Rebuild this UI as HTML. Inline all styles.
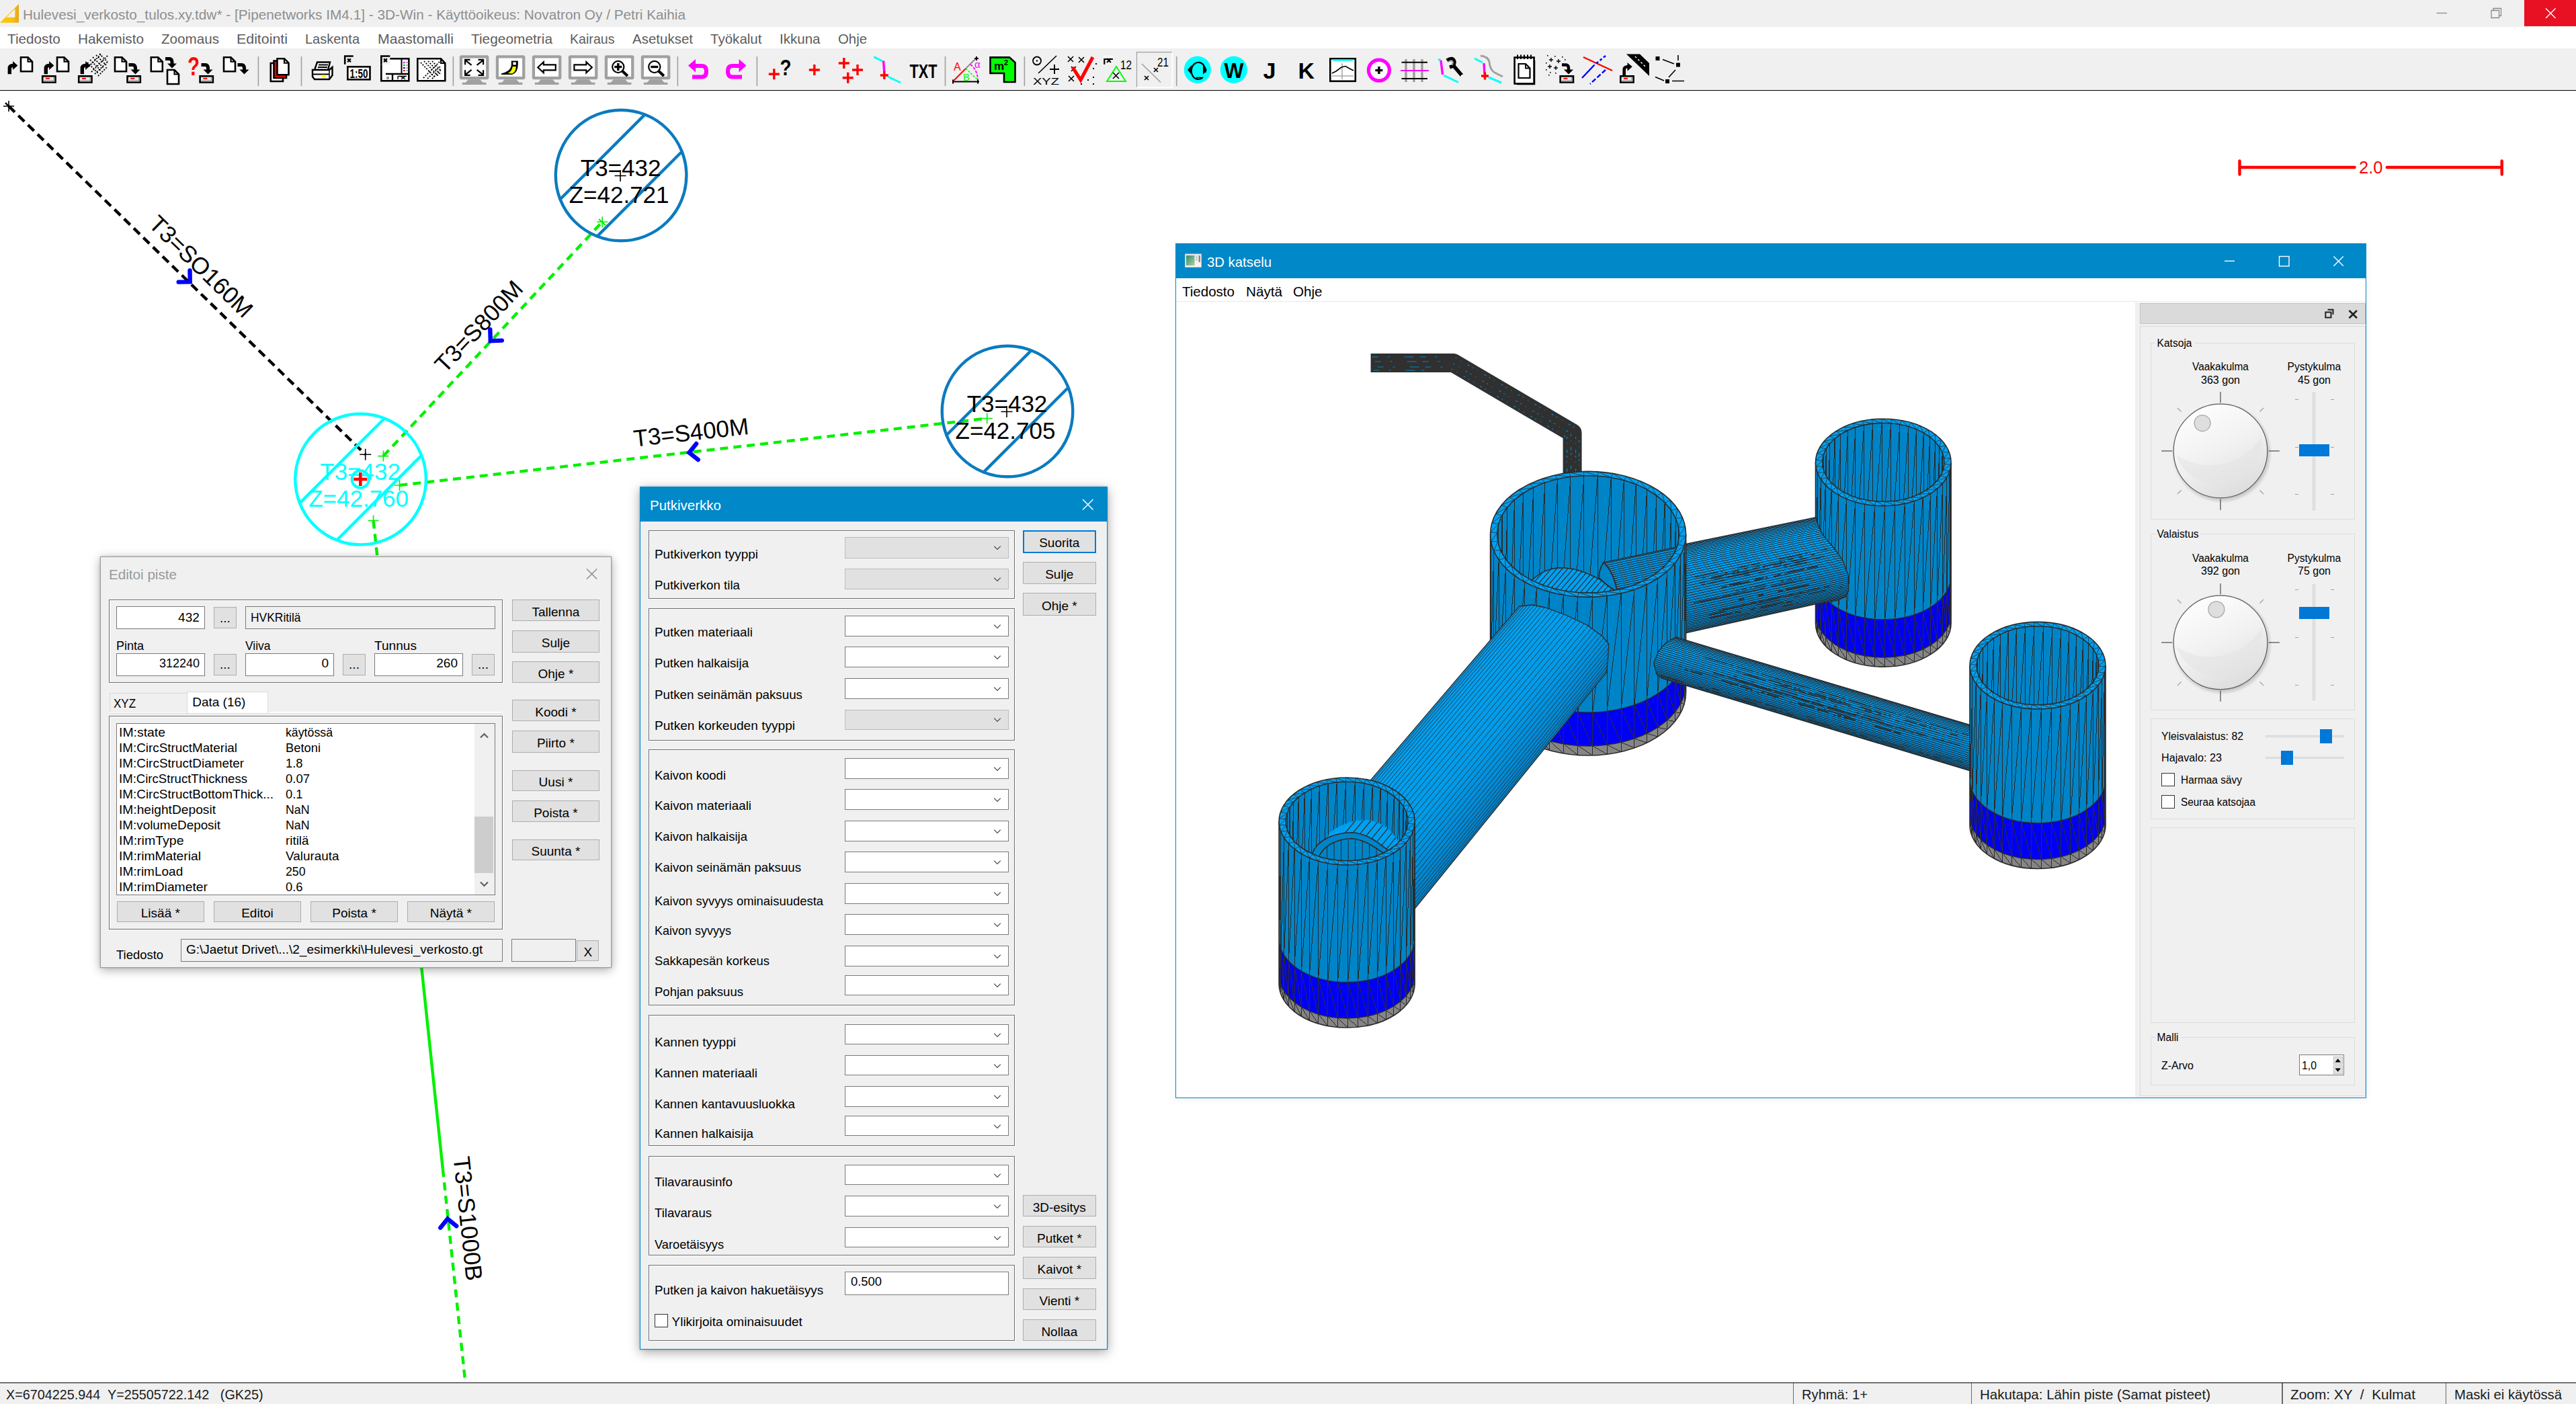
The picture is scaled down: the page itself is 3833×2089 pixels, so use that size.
<!DOCTYPE html>
<html><head><meta charset="utf-8"><title>3D-Win</title><style>html,body{margin:0;padding:0}
body{width:3833px;height:2089px;overflow:hidden;background:#fff;position:relative;font-family:"Liberation Sans",sans-serif}
.t{position:absolute;white-space:pre;line-height:1;transform-origin:0 0}
.b{position:absolute;box-sizing:border-box}
svg{overflow:hidden;display:block}
svg text{font-family:"Liberation Sans",sans-serif}
</style></head><body>
<div class="b" style="left:0.0px;top:0.0px;width:3833.0px;height:40.0px;background:#f0f0f0;"></div><svg style="position:absolute;left:0;top:4px" width="30" height="32" viewBox="0 4 30 32"><defs><linearGradient id="yg" x1="0" x2="1"><stop offset="0" stop-color="#ffc600"/><stop offset="0.6" stop-color="#fbc40c"/><stop offset="1" stop-color="#e8a818"/></linearGradient></defs><path d="M0,33.8 L28,6 V33.8 Z M9.5,25.8 H22.3 V13.2 Z" fill="url(#yg)" fill-rule="evenodd"/></svg><span class="t" style="left:33.5px;top:10.8px;font-size:21px;color:#8e8e8e;transform:scaleX(0.9896);">Hulevesi_verkosto_tulos.xy.tdw* - [Pipenetworks IM4.1] - 3D-Win - Käyttöoikeus: Novatron Oy / Petri Kaihia</span><div class="b" style="left:3756.0px;top:0.0px;width:77.0px;height:38.5px;background:#e81123;"></div><svg style="position:absolute;left:3600px;top:0" width="233" height="40" viewBox="3600 0 233 40"><path d="M3625.5,19.5 H3641" stroke="#8a8a8a" stroke-width="1.3"/><path d="M3707,15.5 H3718.5 V26.5 H3707 Z M3710,15.5 V12.5 H3721.5 V23.5 H3718.5" fill="none" stroke="#8a8a8a" stroke-width="1.3"/><path d="M3788,12.5 L3802.5,27 M3802.5,12.5 L3788,27" stroke="#fff" stroke-width="1.5"/></svg><div class="b" style="left:0.0px;top:40.0px;width:3833.0px;height:32.0px;background:#fff;"></div><span class="t" style="left:11.0px;top:46.8px;font-size:21px;color:#5c5c5c;transform:scaleX(0.9866);">Tiedosto</span><span class="t" style="left:116.0px;top:46.8px;font-size:21px;color:#5c5c5c;transform:scaleX(0.9879);">Hakemisto</span><span class="t" style="left:239.7px;top:46.8px;font-size:21px;color:#5c5c5c;transform:scaleX(0.9824);">Zoomaus</span><span class="t" style="left:352.0px;top:46.8px;font-size:21px;color:#5c5c5c;transform:scaleX(1.0172);">Editointi</span><span class="t" style="left:454.0px;top:46.8px;font-size:21px;color:#5c5c5c;transform:scaleX(0.9503);">Laskenta</span><span class="t" style="left:561.7px;top:46.8px;font-size:21px;color:#5c5c5c;transform:scaleX(1.0086);">Maastomalli</span><span class="t" style="left:700.5px;top:46.8px;font-size:21px;color:#5c5c5c;transform:scaleX(0.9936);">Tiegeometria</span><span class="t" style="left:847.8px;top:46.8px;font-size:21px;color:#5c5c5c;transform:scaleX(0.9339);">Kairaus</span><span class="t" style="left:940.7px;top:46.8px;font-size:21px;color:#5c5c5c;transform:scaleX(0.9760);">Asetukset</span><span class="t" style="left:1056.8px;top:46.8px;font-size:21px;color:#5c5c5c;transform:scaleX(0.9782);">Työkalut</span><span class="t" style="left:1159.7px;top:46.8px;font-size:21px;color:#5c5c5c;transform:scaleX(0.9778);">Ikkuna</span><span class="t" style="left:1246.5px;top:46.8px;font-size:21px;color:#5c5c5c;transform:scaleX(0.9694);">Ohje</span><div class="b" style="left:0.0px;top:72.0px;width:3833.0px;height:62.0px;background:#f0f0f0;"></div><div class="b" style="left:0.0px;top:134.0px;width:3833.0px;height:1.2px;background:#000;height:1.3px;"></div><svg class="tb" style="position:absolute;left:0;top:0" width="2600" height="136" viewBox="0 0 2600 136" font-family="Liberation Sans, sans-serif"><path d="M14.3,110.2 V101.6 Q14.3,97.4 19.6,97.4" fill="none" stroke="#000" stroke-width="5.4"/><path d="M19.1,91.1 L26.4,97.4 L19.1,103.9 Z" fill="#000"/><path d="M31.0,85.3 H41.5 L48.0,91.8 V106.3 H31.0 Z" fill="#fff" stroke="#000" stroke-width="2.6" stroke-linejoin="miter"/><path d="M41.5,85.3 V91.8 H48.0" fill="none" stroke="#000" stroke-width="2.1"/><path d="M68.3,110.2 V101.6 Q68.3,97.4 73.6,97.4" fill="none" stroke="#000" stroke-width="5.4"/><path d="M73.1,91.1 L80.4,97.4 L73.1,103.9 Z" fill="#000"/><path d="M85.0,85.3 H95.5 L102.0,91.8 V106.3 H85.0 Z" fill="#fff" stroke="#000" stroke-width="2.6" stroke-linejoin="miter"/><path d="M95.5,85.3 V91.8 H102.0" fill="none" stroke="#000" stroke-width="2.1"/><rect x="63.2" y="113.3" width="19.3" height="9.2" fill="#e8e8e8" stroke="#000" stroke-width="2.6"/><path d="M65.4,120.6 H80.4 V115.0" fill="none" stroke="#a0a0a0" stroke-width="2"/><rect x="67.9" y="115.8" width="6" height="2" fill="#f00"/><path d="M122.3,110.2 V101.6 Q122.3,97.4 127.6,97.4" fill="none" stroke="#000" stroke-width="5.4"/><path d="M127.1,91.1 L134.4,97.4 L127.1,103.9 Z" fill="#000"/><rect x="117.2" y="113.3" width="19.3" height="9.2" fill="#e8e8e8" stroke="#000" stroke-width="2.6"/><path d="M119.4,120.6 H134.4 V115.0" fill="none" stroke="#a0a0a0" stroke-width="2"/><rect x="121.9" y="115.8" width="6" height="2" fill="#f00"/><g stroke="#000" stroke-width="1.8" stroke-dasharray="2 2" fill="none"><path d="M130,93 L146,109 M134,89 L151,106 M138,85 L155,102 M143,82 L158,97 M148,80 L160,92"/><path d="M136,107 L160,83 M141,110 L160,92 M132,99 L150,81 M146,113 L159,100"/></g><path d="M171.0,85.3 H181.5 L188.0,91.8 V106.3 H171.0 Z" fill="#fff" stroke="#000" stroke-width="2.6" stroke-linejoin="miter"/><path d="M181.5,85.3 V91.8 H188.0" fill="none" stroke="#000" stroke-width="2.1"/><path d="M191.5,96.5 H197.5 Q201.5,96.5 201.5,102.0 V104.0" fill="none" stroke="#000" stroke-width="5"/><path d="M194.5,103.5 H208.5 L201.5,110.5 Z" fill="#000"/><rect x="189.5" y="113.3" width="19.3" height="9.2" fill="#e8e8e8" stroke="#000" stroke-width="2.6"/><path d="M191.7,120.6 H206.7 V115.0" fill="none" stroke="#a0a0a0" stroke-width="2"/><rect x="194.2" y="115.8" width="6" height="2" fill="#f00"/><path d="M224.8,85.3 H235.3 L241.8,91.8 V106.3 H224.8 Z" fill="#fff" stroke="#000" stroke-width="2.6" stroke-linejoin="miter"/><path d="M235.3,85.3 V91.8 H241.8" fill="none" stroke="#000" stroke-width="2.1"/><path d="M246.0,87.5 H252.0 Q256.0,87.5 256.0,93.0 V95.0" fill="none" stroke="#000" stroke-width="5"/><path d="M249.0,94.5 H263.0 L256.0,101.5 Z" fill="#000"/><path d="M249.0,104.0 H259.5 L266.0,110.5 V125.0 H249.0 Z" fill="#fff" stroke="#000" stroke-width="2.6" stroke-linejoin="miter"/><path d="M259.5,104.0 V110.5 H266.0" fill="none" stroke="#000" stroke-width="2.1"/><text x="279.0" y="112.0" font-size="38" fill="#f00" font-weight="bold" textLength="18" lengthAdjust="spacingAndGlyphs">?</text><path d="M299.5,96.5 H305.5 Q309.5,96.5 309.5,102.0 V104.0" fill="none" stroke="#000" stroke-width="5"/><path d="M302.5,103.5 H316.5 L309.5,110.5 Z" fill="#000"/><rect x="297.6" y="113.3" width="19.3" height="9.2" fill="#e8e8e8" stroke="#000" stroke-width="2.6"/><path d="M299.8,120.6 H314.8 V115.0" fill="none" stroke="#a0a0a0" stroke-width="2"/><rect x="302.3" y="115.8" width="6" height="2" fill="#f00"/><path d="M333.0,85.3 H343.5 L350.0,91.8 V106.3 H333.0 Z" fill="#fff" stroke="#000" stroke-width="2.6" stroke-linejoin="miter"/><path d="M343.5,85.3 V91.8 H350.0" fill="none" stroke="#000" stroke-width="2.1"/><path d="M353.5,96.5 H359.5 Q363.5,96.5 363.5,102.0 V104.0" fill="none" stroke="#000" stroke-width="5"/><path d="M356.5,103.5 H370.5 L363.5,110.5 Z" fill="#000"/><rect x="383.6" y="84" width="1.6" height="44" fill="#a0a0a0"/><path d="M402.8,94 H421 V121 H402.8 Z" fill="#fff" stroke="#000" stroke-width="2.6"/><path d="M407.5,90.5 H426 V116 H407.5 Z" fill="#f00" stroke="#000" stroke-width="2.6"/><path d="M412.5,87.2 H423.0 L429.5,93.7 V111.2 H412.5 Z" fill="#fff" stroke="#000" stroke-width="2.6" stroke-linejoin="miter"/><path d="M423.0,87.2 V93.7 H429.5" fill="none" stroke="#000" stroke-width="2.1"/><rect x="447.7" y="84" width="1.6" height="44" fill="#a0a0a0"/><path d="M472,92.5 H491 L488,104 H468 Z" fill="#fff" stroke="#000" stroke-width="2.4"/><path d="M474,96.5 H488 M473,100 H487" stroke="#000" stroke-width="1.8"/><path d="M465,104 H490 L494.5,100 V112 L490,118 H468 L465,114 Z" fill="#fff" stroke="#000" stroke-width="2.4"/><path d="M466,110.5 H490" stroke="#000" stroke-width="2"/><rect x="478" y="111.5" width="6" height="3" fill="#ff0"/><path d="M490,104 V118" stroke="#000" stroke-width="1.5"/><path d="M513.2,95.8 V83.5 H525.7" fill="none" stroke="#000" stroke-width="2.6"/><path d="M516.1,89.8 H522.9 M519.5,86.4 V93.2" stroke="#000" stroke-width="2.2" fill="none" transform="rotate(45 519.5 89.8)"/><rect x="517.3" y="99.3" width="33.2" height="19" fill="#fff" stroke="#000" stroke-width="2.6"/><text x="520.5" y="115.5" font-size="18" fill="#000" font-weight="bold" textLength="27" lengthAdjust="spacingAndGlyphs">1:50</text><rect x="567.3" y="87.3" width="41" height="33" fill="#fff" stroke="#000" stroke-width="2.6"/><rect x="566" y="82.2" width="14.3" height="13.6" fill="#f0f0f0"/><path d="M567.3,95.8 V83.5 H580.3" fill="none" stroke="#000" stroke-width="2.6"/><path d="M570.1,89.8 H576.9 M573.5,86.4 V93.2" stroke="#000" stroke-width="2.2" fill="none" transform="rotate(45 573.5 89.8)"/><path d="M597.5,87 V110" stroke="#000" stroke-width="2"/><path d="M574,110 H609 M584,110 V120" stroke="#000" stroke-width="2.4"/><rect x="600" y="92" width="2.6" height="2.2" fill="#f0f"/><rect x="600" y="96" width="2.6" height="2.2" fill="#0c0"/><rect x="600" y="100" width="2.6" height="2.2" fill="#00f"/><rect x="600" y="104" width="2.6" height="2.2" fill="#f00"/><path d="M604,93 H607.5 M604,97 H607.5 M604,101 H607.5 M604,105 H607.5" stroke="#999" stroke-width="1.6"/><path d="M592,113.5 H605 M592,113.5 V118 M596,113.5 L603,118 M603,113.5 L597,118" stroke="#000" stroke-width="1.4"/><path d="M575,114 h4 v4 h-4z" fill="#999"/><path d="M621.3,87.3 H656 L662.3,94 V120.3 H621.3 Z" fill="#fff" stroke="#000" stroke-width="2.6"/><path d="M656,87.3 V94 H662.3" fill="none" stroke="#000" stroke-width="2"/><g stroke="#000" stroke-width="1.8" stroke-dasharray="2 2" fill="none"><path d="M626,93 L648,116 M631,91 L653,114 M637,91 L655,110 M643,91 L656,105"/><path d="M630,116 L654,92 M636,117 L656,98 M643,117 L657,103"/></g><rect x="673.6" y="84" width="1.6" height="44" fill="#a0a0a0"/><rect x="683.8" y="82.2" width="43.6" height="36" rx="3" fill="#a0a0a0"/><rect x="688.1" y="86.5" width="35.0" height="27.4" fill="#fff"/><path d="M696.8,118.2 H714.4 L718.4,122.7 H723.4 V126.0 H687.8 V122.7 H692.8 Z" fill="#a0a0a0"/><rect x="737.8" y="82.2" width="43.6" height="36" rx="3" fill="#a0a0a0"/><rect x="742.1" y="86.5" width="35.0" height="27.4" fill="#fff"/><path d="M750.8,118.2 H768.4 L772.4,122.7 H777.4 V126.0 H741.8 V122.7 H746.8 Z" fill="#a0a0a0"/><rect x="791.8" y="82.2" width="43.6" height="36" rx="3" fill="#a0a0a0"/><rect x="796.1" y="86.5" width="35.0" height="27.4" fill="#fff"/><path d="M804.8,118.2 H822.4 L826.4,122.7 H831.4 V126.0 H795.8 V122.7 H800.8 Z" fill="#a0a0a0"/><rect x="845.8" y="82.2" width="43.6" height="36" rx="3" fill="#a0a0a0"/><rect x="850.1" y="86.5" width="35.0" height="27.4" fill="#fff"/><path d="M858.8,118.2 H876.4 L880.4,122.7 H885.4 V126.0 H849.8 V122.7 H854.8 Z" fill="#a0a0a0"/><rect x="899.8" y="82.2" width="43.6" height="36" rx="3" fill="#a0a0a0"/><rect x="904.1" y="86.5" width="35.0" height="27.4" fill="#fff"/><path d="M912.8,118.2 H930.4 L934.4,122.7 H939.4 V126.0 H903.8 V122.7 H908.8 Z" fill="#a0a0a0"/><rect x="953.8" y="82.2" width="43.6" height="36" rx="3" fill="#a0a0a0"/><rect x="958.1" y="86.5" width="35.0" height="27.4" fill="#fff"/><path d="M966.8,118.2 H984.4 L988.4,122.7 H993.4 V126.0 H957.8 V122.7 H962.8 Z" fill="#a0a0a0"/><g stroke="#000" stroke-width="2.2" fill="none"><path d="M701.5999999999999,96.8 L692.0999999999999,89.3 M692.0999999999999,96.3 V88.8 H699.5999999999999"/><path d="M709.5999999999999,96.8 L719.0999999999999,89.3 M719.0999999999999,96.3 V88.8 H711.5999999999999"/><path d="M701.5999999999999,103.8 L692.0999999999999,111.3 M692.0999999999999,104.3 V111.8 H699.5999999999999"/><path d="M709.5999999999999,103.8 L719.0999999999999,111.3 M719.0999999999999,104.3 V111.8 H711.5999999999999"/></g><path d="M745.8,111 H761.8 Q770.8,108 770.8,96 V90.5 H760.8 V97 Q759.8,106 745.8,109.5 Z" fill="#000"/><path d="M755.8,109 Q761.8,106 762.8,99 H767.8 Q767.8,107 761.8,109.5 Z" fill="#ff0"/><rect x="763.3" y="92.5" width="4.5" height="4" fill="#fff"/><path d="M800.3,100.3 L808.8,92.3 V96.3 H826.8 V104.3 H808.8 V108.3 Z" fill="#fff" stroke="#000" stroke-width="2.2"/><path d="M880.9,100.3 L872.4,92.3 V96.3 H854.4 V104.3 H872.4 V108.3 Z" fill="#fff" stroke="#000" stroke-width="2.2"/><circle cx="919.8" cy="99.5" r="8.6" fill="#fff" stroke="#000" stroke-width="2.2"/><path d="M926.3,106.0 L933.8,113.0" stroke="#000" stroke-width="4.2"/><path d="M914.3,99.5 H925.3" stroke="#000" stroke-width="3.4"/><path d="M919.8,94.0 V105.0" stroke="#000" stroke-width="3.4"/><circle cx="973.8" cy="99.5" r="8.6" fill="#fff" stroke="#000" stroke-width="2.2"/><path d="M980.3,106.0 L987.8,113.0" stroke="#000" stroke-width="4.2"/><path d="M968.3,99.5 H979.3" stroke="#000" stroke-width="3.4"/><rect x="1007.6" y="84" width="1.6" height="44" fill="#a0a0a0"/><path d="M1031,98 H1044 Q1051,98 1051,106 Q1051,114.5 1044,114.5 H1030" fill="none" stroke="#f0f" stroke-width="6"/><path d="M1024,97.5 L1035,88 V107.5 Z" fill="#f0f"/><path d="M1103,98 H1090 Q1083,98 1083,106 Q1083,114.5 1090,114.5 H1104" fill="none" stroke="#f0f" stroke-width="6"/><path d="M1110.5,97.5 L1099.5,88 V107.5 Z" fill="#f0f"/><rect x="1125.6" y="84" width="1.6" height="44" fill="#a0a0a0"/><path d="M1143.8,110.2 H1159.8 M1151.8,102.2 V118.2" stroke="#f00" stroke-width="3.4" fill="none"/><text x="1160.5" y="112.0" font-size="34" fill="#000" font-weight="bold" textLength="17" lengthAdjust="spacingAndGlyphs">?</text><path d="M1203.8,104.0 H1219.8 M1211.8,96.0 V112.0" stroke="#f00" stroke-width="3.4" fill="none"/><path d="M1247.8,94.0 H1263.8 M1255.8,86.0 V102.0" stroke="#f00" stroke-width="3.4" fill="none"/><path d="M1268.0,104.0 H1284.0 M1276.0,96.0 V112.0" stroke="#f00" stroke-width="3.4" fill="none"/><path d="M1253.7,115.8 H1269.7 M1261.7,107.8 V123.8" stroke="#f00" stroke-width="3.4" fill="none"/><path d="M1300.3,84.7 L1313,91" stroke="#0ff" stroke-width="3"/><path d="M1314.5,90.5 L1315.8,107" stroke="#f0f" stroke-width="3.4"/><path d="M1309.8,112.0 H1321.8 M1315.8,106.0 V118.0" stroke="#f00" stroke-width="3.4" fill="none"/><path d="M1321,114 L1340,123" stroke="#0ff" stroke-width="3"/><text x="1353.5" y="116.0" font-size="30" fill="#000" font-weight="bold" textLength="41" lengthAdjust="spacingAndGlyphs">TXT</text><rect x="1405.7" y="84" width="1.6" height="44" fill="#a0a0a0"/><path d="M1418,121.5 H1457" stroke="#000" stroke-width="2.2"/><path d="M1418,118.5 V124.5 M1455,118.5 V124.5" stroke="#000" stroke-width="2"/><path d="M1419,120 L1437,102" stroke="#f00" stroke-width="2"/><path d="M1437,102 L1452,87" stroke="#888" stroke-width="1.8"/><path d="M1450.0,87.0 H1456.0 M1453.0,84.0 V90.0" stroke="#000" stroke-width="2" fill="none"/><path d="M1437,102 L1455,119" stroke="#0f0" stroke-width="1.6" stroke-dasharray="3 2"/><path d="M1444,96 Q1454,104 1455,118" stroke="#f0f" stroke-width="1.8" fill="none" stroke-dasharray="4 2"/><text x="1419.0" y="105.0" font-size="16" fill="#f00">A</text><text x="1433.0" y="119.5" font-size="15" fill="#0f0">B</text><text x="1450.0" y="101.0" font-size="15" fill="#f0f">α</text><path d="M1473.5,85.4 H1502 L1510.5,93 V122 H1494 V109 H1473.5 Z" fill="#0f0" stroke="#000" stroke-width="2.6"/><text x="1479.0" y="104.0" font-size="17" fill="#000" font-weight="bold">m</text><text x="1494.0" y="97.0" font-size="11" fill="#000" font-weight="bold">2</text><rect x="1523.6" y="84" width="1.6" height="44" fill="#a0a0a0"/><circle cx="1543" cy="90.5" r="6" fill="none" stroke="#000" stroke-width="1.8"/><circle cx="1543" cy="90.5" r="1.2" fill="#000"/><path d="M1545,109 L1572,83" stroke="#000" stroke-width="1.6"/><path d="M1562.0,103.0 H1576.0 M1569.0,96.0 V110.0" stroke="#000" stroke-width="2" fill="none"/><text x="1537.0" y="125.5" font-size="15" fill="#000" textLength="39" lengthAdjust="spacingAndGlyphs">XYZ</text><g stroke="#000" stroke-width="1.6"><path d="M1589,84 l8,8 m0,-8 l-8,8 M1605,85 l8,8 m0,-8 l-8,8 M1590,113 l8,8 m0,-8 l-8,8 M1594,99 l7,7 m0,-7 l-7,7"/></g><path d="M1596,100 L1608,119 L1626,85" fill="none" stroke="#f00" stroke-width="5"/><g fill="#000"><rect x="1630" y="94" width="2" height="2"/><rect x="1626" y="101" width="2" height="2"/><rect x="1626" y="114" width="2" height="2"/><rect x="1618" y="118" width="2" height="2"/><rect x="1626" y="124" width="2" height="2"/><rect x="1608" y="124" width="2" height="2"/></g><rect x="1642" y="82.2" width="14.3" height="13.6" fill="#f7f7f7"/><path d="M1643.3,95.8 V88 H1656" fill="none" stroke="#000" stroke-width="2.2"/><path d="M1647,87 l6,6 m0,-6 l-6,6" stroke="#000" stroke-width="2"/><path d="M1661,99 L1647,121 H1675 Z" fill="none" stroke="#0f0" stroke-width="2"/><path d="M1656,108 l9,9 m0,-9 l-9,9" stroke="#000" stroke-width="1.6"/><text x="1667.0" y="103.0" font-size="18" fill="#000" textLength="17" lengthAdjust="spacingAndGlyphs">12</text><rect x="1691" y="77.2" width="53.5" height="53" fill="#f0f0f0"/><path d="M1691.5,130 V77.7 H1744" fill="none" stroke="#a0a0a0" stroke-width="1.2"/><path d="M1691.5,130.2 H1744.4 V77.7" fill="none" stroke="#fff" stroke-width="1.8"/><path d="M1699,95 L1727,122.5" stroke="#999" stroke-width="1.4"/><path d="M1717,101 l6,6 m0,-6 l-6,6 M1703,113 l6,6 m0,-6 l-6,6" stroke="#000" stroke-width="1.6"/><text x="1722.0" y="98.5" font-size="18" fill="#000" textLength="17" lengthAdjust="spacingAndGlyphs">21</text><rect x="1749.9" y="84" width="1.6" height="44" fill="#a0a0a0"/><circle cx="1781.8" cy="103.7" r="20.1" fill="#0ff"/><path d="M1790,115 A10.5,12.5 0 1 1 1793.5,108" fill="none" stroke="#000" stroke-width="2.2"/><path d="M1767,104 L1773,97 V111 Z M1796,104 L1790,97 V111 Z" fill="#000"/><path d="M1780,115.5 H1788" stroke="#000" stroke-width="1.6"/><circle cx="1835.8" cy="103.7" r="20.1" fill="#0ff"/><text x="1821.5" y="115.5" font-size="32" fill="#000" font-weight="bold" textLength="29" lengthAdjust="spacingAndGlyphs">W</text><text x="1879.5" y="116.8" font-size="33" fill="#000" font-weight="bold" textLength="19" lengthAdjust="spacingAndGlyphs">J</text><text x="1931.5" y="116.8" font-size="33" fill="#000" font-weight="bold" textLength="24.5" lengthAdjust="spacingAndGlyphs">K</text><rect x="1979.3" y="87.3" width="37.5" height="33.5" fill="#fff" stroke="#000" stroke-width="2.6"/><path d="M1983,89.5 H2013" stroke="#0ff" stroke-width="2.4"/><path d="M1997,94 V118 M1982,113 H2014" stroke="#aaa" stroke-width="1.6"/><path d="M1982,109 L1988,106 L1996,100 L2002,98.5 L2008,102 L2014,105" fill="none" stroke="#000" stroke-width="1.6"/><circle cx="2051.9" cy="104.6" r="15.5" fill="#fff" stroke="#f0f" stroke-width="5.2"/><path d="M2046.4,104.6 H2057.4 M2051.9,99.1 V110.1" stroke="#000" stroke-width="3.4" fill="none"/><path d="M2092,88 V122 M2104,88 V122 M2116,88 V122" stroke="#999" stroke-width="3.2"/><path d="M2085.5,92.8 H2124 M2085.5,117 H2124" stroke="#000" stroke-width="2"/><path d="M2084,105 H2126" stroke="#f0f" stroke-width="2"/><path d="M2140,88 L2144,90" stroke="#0ff" stroke-width="3"/><path d="M2144,90 L2146.5,111" stroke="#f0f" stroke-width="3.4" fill="none"/><path d="M2148,112 L2170,122.5" stroke="#0ff" stroke-width="3"/><path d="M2153,90 Q2162,84 2164,92 L2163,98 L2157,100 M2163,98 L2175,112" fill="none" stroke="#000" stroke-width="5.5"/><path d="M2155,92 Q2161,88 2162,93 L2161,97" fill="none" stroke="#999" stroke-width="2"/><circle cx="2175.5" cy="112.5" r="1.6" fill="#fff"/><path d="M2194,87 L2206,93" stroke="#0ff" stroke-width="3"/><path d="M2208,94 L2209,110" stroke="#f0f" stroke-width="3.4"/><path d="M2204.0,113.0 H2215.0 M2209.5,107.5 V118.5" stroke="#f00" stroke-width="3.4" fill="none"/><path d="M2215,115 L2234,123" stroke="#0ff" stroke-width="3"/><path d="M2203,83 Q2214,84 2216,92 Q2217,104 2224,108 L2236,114" fill="none" stroke="#a0a0a0" stroke-width="3"/><rect x="2253.6" y="85.5" width="29" height="39" fill="#fff" stroke="#000" stroke-width="2.6"/><path d="M2258,81.5 V88 M2263,81.5 V88 M2268,81.5 V88 M2273,81.5 V88 M2278,81.5 V88" stroke="#000" stroke-width="2"/><path d="M2283.5,90 V125.5 H2257" stroke="#000" stroke-width="1.6" fill="none"/><path d="M2259.5,95.0 H2270.0 L2276.5,101.5 V116.0 H2259.5 Z" fill="#fff" stroke="#000" stroke-width="2.2" stroke-linejoin="miter"/><path d="M2270.0,95.0 V101.5 H2276.5" fill="none" stroke="#000" stroke-width="1.8"/><g stroke="#000" stroke-width="1.4"><path d="M2305,89 h6 m-3,-3 v6 M2316,91 h6 m-3,-3 v6 M2303,99 h6 m-3,-3 v6 M2312,101 h6 m-3,-3 v6"/></g><g fill="#000"><rect x="2302" y="82" width="1.6" height="1.6"/><rect x="2313" y="83" width="1.6" height="1.6"/><rect x="2324" y="84" width="1.6" height="1.6"/><rect x="2328" y="88" width="1.6" height="1.6"/><rect x="2300" y="93" width="1.6" height="1.6"/><rect x="2300" y="103" width="1.6" height="1.6"/><rect x="2306" y="107" width="1.6" height="1.6"/><rect x="2314" y="108" width="1.6" height="1.6"/><rect x="2304" y="111" width="1.6" height="1.6"/></g><path d="M2324.0,96.5 H2330.0 Q2334.0,96.5 2334.0,102.0 V104.0" fill="none" stroke="#000" stroke-width="4.4"/><path d="M2327.0,103.5 H2341.0 L2334.0,110.5 Z" fill="#000"/><rect x="2321.7" y="113.3" width="19.3" height="9.2" fill="#e8e8e8" stroke="#000" stroke-width="2.6"/><path d="M2323.9,120.6 H2338.9 V115.0" fill="none" stroke="#a0a0a0" stroke-width="2"/><rect x="2326.4" y="115.8" width="6" height="2" fill="#f00"/><path d="M2356,85 L2399,105" stroke="#f00" stroke-width="2.4"/><path d="M2372,97 L2354,116" stroke="#00f" stroke-width="2.4"/><path d="M2389,83 L2372,97" stroke="#00f" stroke-width="2.4" stroke-dasharray="4 3"/><path d="M2389,104 L2366,125" stroke="#00f" stroke-width="2.4" stroke-dasharray="7 3"/><path d="M2416.7,112.1 V103.5 Q2416.7,99.3 2422.0,99.3" fill="none" stroke="#000" stroke-width="4.6"/><path d="M2421.5,93.0 L2428.8,99.3 L2421.5,105.8 Z" fill="#000"/><rect x="2411.3" y="113.3" width="19.3" height="9.2" fill="#e8e8e8" stroke="#000" stroke-width="2.6"/><path d="M2413.5,120.6 H2428.5 V115.0" fill="none" stroke="#a0a0a0" stroke-width="2"/><rect x="2416.0" y="115.8" width="6" height="2" fill="#f00"/><path d="M2420,80.5 H2440 L2454,94 V113 Z" fill="#000"/><path d="M2433,84 L2450,101" stroke="#fff" stroke-width="1.4" stroke-dasharray="3 3"/><g fill="#000"><rect x="2463.5" y="84" width="6" height="6"/><rect x="2494" y="93.5" width="6" height="6"/><rect x="2478" y="118" width="6" height="6"/></g><path d="M2474,88.5 L2491,95 M2493,104 L2483,115 M2476,120 L2463,114.5 M2488,120.5 H2506 M2497,82 V90" stroke="#000" stroke-width="1.6" fill="none"/></svg><div class="b" style="left:0.0px;top:2057.0px;width:3833.0px;height:32.0px;background:#f0f0f0;"></div><div class="b" style="left:0.0px;top:2056.6px;width:3833.0px;height:1.4px;background:#000;height:1.3px;"></div><div class="b" style="left:2667.7px;top:2058.0px;width:1.6px;height:31.0px;background:#6a6a6a;"></div><div class="b" style="left:2932.8px;top:2058.0px;width:1.6px;height:31.0px;background:#6a6a6a;"></div><div class="b" style="left:3395.2px;top:2058.0px;width:1.6px;height:31.0px;background:#6a6a6a;"></div><div class="b" style="left:3638.5px;top:2058.0px;width:1.6px;height:31.0px;background:#6a6a6a;"></div><span class="t" style="left:9.0px;top:2064.2px;font-size:21px;color:#1a1a1a;transform:scaleX(0.9425);">X=6704225.944  Y=25505722.142   (GK25)</span><span class="t" style="left:2680.5px;top:2064.2px;font-size:21px;color:#1a1a1a;transform:scaleX(0.9596);">Ryhmä: 1+</span><span class="t" style="left:2945.6px;top:2064.2px;font-size:21px;color:#1a1a1a;transform:scaleX(0.9762);">Hakutapa: Lähin piste (Samat pisteet)</span><span class="t" style="left:3408.0px;top:2064.2px;font-size:21px;color:#1a1a1a;transform:scaleX(0.9919);">Zoom: XY  /  Kulmat</span><span class="t" style="left:3651.7px;top:2064.2px;font-size:21px;color:#1a1a1a;transform:scaleX(0.9654);">Maski ei käytössä</span>
<svg style="position:absolute;left:0;top:136px" width="3833" height="1921" viewBox="0 136 3833 1921" font-family="Liberation Sans, sans-serif"><path d="M13,158 L543.7,676.2" stroke="#000" stroke-width="4.4" stroke-dasharray="12.5 7.5" fill="none"/><path d="M5.0,158.0 H21.0 M13.0,150.0 V166.0" stroke="#000" stroke-width="1.6" fill="none"/><path d="M8,153 L18,163" stroke="#000" stroke-width="2.4"/><path d="M535.2,676.2 H552.2 M543.7,667.7 V684.7" stroke="#000" stroke-width="1.6" fill="none"/><text transform="translate(219.5,335.5) rotate(44.30)" font-size="35" fill="#000">T3=SO160M</text><path d="M265.7,419.6 L282.7,419.4 L282.5,402.4" fill="none" stroke="#00f" stroke-width="6.4" stroke-linejoin="miter" stroke-linecap="round"/><path d="M570.4,678.6 L896.2,330.2" stroke="#00f000" stroke-width="4.4" stroke-dasharray="12 8" fill="none"/><text transform="translate(662.0,556.5) rotate(-46.60)" font-size="35" fill="#000">T3=S800M</text><path d="M729.3,490.1 L729.8,507.1 L746.8,506.6" fill="none" stroke="#00f" stroke-width="6.4" stroke-linejoin="miter" stroke-linecap="round"/><path d="M594.5,722 L1468.7,622.5" stroke="#00f000" stroke-width="4.4" stroke-dasharray="12 8" fill="none"/><text transform="translate(944.0,664.7) rotate(-6.30)" font-size="35" fill="#000">T3=S400M</text><path d="M1036.1,660.2 L1025.5,673.5 L1038.8,684.1" fill="none" stroke="#00f" stroke-width="6.4" stroke-linejoin="miter" stroke-linecap="round"/><path d="M555.6,774.5 L627.4,1440.8" stroke="#00f000" stroke-width="4.4" stroke-dasharray="12 8" fill="none"/><path d="M627.4,1440.8 L658.9,1739.4" stroke="#00f000" stroke-width="4.4" fill="none"/><path d="M658.9,1739.4 L692.4,2057" stroke="#00f000" stroke-width="4.4" stroke-dasharray="12 8" fill="none"/><text transform="translate(674.5,1722.0) rotate(84.00)" font-size="35" fill="#000">T3=S1000B</text><path d="M679.2,1824.2 L666.0,1813.5 L655.3,1826.7" fill="none" stroke="#00f" stroke-width="6.4" stroke-linejoin="miter" stroke-linecap="round"/><circle cx="924.1" cy="261" r="97.3" fill="none" stroke="#0b7bbf" stroke-width="4.4"/><path d="M833.5,296.5 L959.6,170.4" stroke="#0b7bbf" stroke-width="4.4"/><path d="M888.6,351.6 L1014.7,225.5" stroke="#0b7bbf" stroke-width="4.4"/><text x="923.6" y="261.5" font-size="35" fill="#000" text-anchor="middle">T3=432</text><text x="921.1" y="301.7" font-size="35" fill="#000" text-anchor="middle">Z=42.721</text><path d="M914.6,261.5 H931.6 M923.1,253.0 V270.0" stroke="#000" stroke-width="1.6" fill="none"/><path d="M888.2,330.2 H904.2 M896.2,322.2 V338.2" stroke="#00f000" stroke-width="1.6" fill="none"/><path d="M891,326 L901,335" stroke="#00f000" stroke-width="2"/><circle cx="1499" cy="612" r="97.3" fill="none" stroke="#0b7bbf" stroke-width="4.4"/><path d="M1408.4,647.5 L1534.5,521.4" stroke="#0b7bbf" stroke-width="4.4"/><path d="M1463.5,702.6 L1589.6,576.5" stroke="#0b7bbf" stroke-width="4.4"/><text x="1498.5" y="612.5" font-size="35" fill="#000" text-anchor="middle">T3=432</text><text x="1496" y="652.7" font-size="35" fill="#000" text-anchor="middle">Z=42.705</text><path d="M1489.5,612.5 H1506.5 M1498.0,604.0 V621.0" stroke="#000" stroke-width="1.6" fill="none"/><path d="M1460.7,622.5 H1476.7 M1468.7,614.5 V630.5" stroke="#00f000" stroke-width="1.6" fill="none"/><circle cx="536.6" cy="713.1" r="97.3" fill="none" stroke="#0ff" stroke-width="4.4"/><path d="M446.0,748.6 L572.1,622.5" stroke="#0ff" stroke-width="4.4"/><path d="M501.1,803.7 L627.2,677.6" stroke="#0ff" stroke-width="4.4"/><text x="536.1" y="713.6" font-size="35" fill="#0ff" text-anchor="middle">T3=432</text><text x="533.6" y="753.8000000000001" font-size="35" fill="#0ff" text-anchor="middle">Z=42.760</text><circle cx="536.3" cy="713" r="12.7" fill="none" stroke="#0ff" stroke-width="4"/><path d="M526.3,713.0 H546.3 M536.3,703.0 V723.0" stroke="#f00" stroke-width="4.6" fill="none"/><path d="M562.4,678.6 H578.4 M570.4,670.6 V686.6" stroke="#00f000" stroke-width="1.6" fill="none"/><path d="M586.5,722.0 H602.5 M594.5,714.0 V730.0" stroke="#00f000" stroke-width="1.6" fill="none"/><path d="M547.6,774.5 H563.6 M555.6,766.5 V782.5" stroke="#00f000" stroke-width="1.6" fill="none"/><path d="M3332.5,249 H3503.6 M3551.8,249 H3722.7 M3332.5,239.5 V259.5 M3722.7,239.5 V259.5" stroke="#f00" stroke-width="4.4" stroke-linecap="round" fill="none"/><text x="3527.7" y="258.2" font-size="25.5" fill="#f00" text-anchor="middle">2.0</text></svg>
<div class="b" style="left:148.5px;top:827.5px;width:761.5px;height:612.5px;background:#f0f0f0;border:1px solid #9b9b9b;box-shadow:0 3px 14px rgba(0,0,0,0.33),0 0 3px rgba(0,0,0,0.2);"></div><span class="t" style="left:162.0px;top:843.8px;font-size:21px;color:#999;transform:scaleX(0.9832);">Editoi piste</span><svg style="position:absolute;left:870px;top:843px" width="22" height="22" viewBox="870 843 22 22"><path d="M873,846.5 L888.3,861.4 M888.3,846.5 L873,861.4" stroke="#8a8a8a" stroke-width="1.4"/></svg><div class="b" style="left:162.3px;top:892.3px;width:586.4px;height:124.9px;border:1px solid #fff;border-left-color:transparent;border-top-color:transparent;"></div><div class="b" style="left:162.3px;top:892.3px;width:585.4px;height:123.9px;border:1px solid #6d6d6d;box-shadow:inset 1px 1px 0 #fff;"></div><div class="b" style="left:172.9px;top:902.2px;width:131.9px;height:34.2px;background:#fff;border:1px solid #7a7a7a;"></div><span class="t" style="left:265.1px;top:908.5px;font-size:19.0px;color:#000;">432</span><div class="b" style="left:318.2px;top:903.2px;width:33.5px;height:32.3px;background:#e1e1e1;border:1px solid #adadad;"></div><span class="t" style="left:327.0px;top:910.2px;font-size:19.0px;color:#000;">...</span><div class="b" style="left:365.1px;top:902.2px;width:371.7px;height:34.2px;background:#f0f0f0;border:1px solid #7a7a7a;"></div><span class="t" style="left:373.2px;top:908.5px;font-size:19.0px;color:#000;transform:scaleX(0.9164);">HVKRitilä</span><span class="t" style="left:172.9px;top:950.9px;font-size:19.0px;color:#000;transform:scaleX(0.9467);">Pinta</span><span class="t" style="left:365.1px;top:950.9px;font-size:19.0px;color:#000;transform:scaleX(0.9182);">Viiva</span><span class="t" style="left:557.0px;top:950.9px;font-size:19.0px;color:#000;transform:scaleX(1.0053);">Tunnus</span><div class="b" style="left:172.9px;top:971.5px;width:131.9px;height:34.2px;background:#fff;border:1px solid #7a7a7a;"></div><span class="t" style="left:236.8px;top:977.4px;font-size:19.0px;color:#000;transform:scaleX(0.9463);">312240</span><div class="b" style="left:318.2px;top:972.5px;width:33.5px;height:32.2px;background:#e1e1e1;border:1px solid #adadad;"></div><span class="t" style="left:327.0px;top:979.4px;font-size:19.0px;color:#000;">...</span><div class="b" style="left:365.1px;top:971.5px;width:131.7px;height:34.2px;background:#fff;border:1px solid #7a7a7a;"></div><span class="t" style="left:478.4px;top:977.4px;font-size:19.0px;color:#000;">0</span><div class="b" style="left:510.4px;top:972.5px;width:33.3px;height:32.2px;background:#e1e1e1;border:1px solid #adadad;"></div><span class="t" style="left:519.1px;top:979.4px;font-size:19.0px;color:#000;">...</span><div class="b" style="left:557.0px;top:971.5px;width:131.7px;height:34.2px;background:#fff;border:1px solid #7a7a7a;"></div><span class="t" style="left:649.3px;top:977.4px;font-size:19.0px;color:#000;">260</span><div class="b" style="left:702.4px;top:972.5px;width:33.2px;height:32.2px;background:#e1e1e1;border:1px solid #adadad;"></div><span class="t" style="left:711.1px;top:979.4px;font-size:19.0px;color:#000;">...</span><div class="b" style="left:162.0px;top:1059.0px;width:585.0px;height:2.5px;background:#fff;border-bottom:1px solid #dcdcdc;"></div><div class="b" style="left:162.9px;top:1031.1px;width:116.1px;height:28.5px;background:#f0f0f0;border:1px solid #d9d9d9;border-bottom:none;"></div><div class="b" style="left:278.4px;top:1029.3px;width:120.2px;height:31.7px;background:#fff;border:1px solid #d9d9d9;border-bottom:none;"></div><span class="t" style="left:168.8px;top:1036.9px;font-size:19.0px;color:#000;transform:scaleX(0.8930);">XYZ</span><span class="t" style="left:286.2px;top:1035.1px;font-size:19.0px;color:#000;">Data (16)</span><div class="b" style="left:162.3px;top:1064.7px;width:586.4px;height:319.5px;border:1px solid #fff;border-left-color:transparent;border-top-color:transparent;"></div><div class="b" style="left:162.3px;top:1064.7px;width:585.4px;height:318.5px;border:1px solid #6d6d6d;box-shadow:inset 1px 1px 0 #fff;"></div><div class="b" style="left:172.9px;top:1075.5px;width:563.9px;height:256.2px;background:#fff;border:1px solid #7a7a7a;"></div><span class="t" style="left:177.2px;top:1080.2px;font-size:19.0px;color:#000;transform:scaleX(1.0211);">IM:state</span><span class="t" style="left:425.0px;top:1080.2px;font-size:19.0px;color:#000;transform:scaleX(0.9336);">käytössä</span><span class="t" style="left:177.2px;top:1103.2px;font-size:19.0px;color:#000;transform:scaleX(0.9923);">IM:CircStructMaterial</span><span class="t" style="left:425.0px;top:1103.2px;font-size:19.0px;color:#000;transform:scaleX(0.9652);">Betoni</span><span class="t" style="left:177.2px;top:1126.2px;font-size:19.0px;color:#000;transform:scaleX(0.9954);">IM:CircStructDiameter</span><span class="t" style="left:425.0px;top:1126.2px;font-size:19.0px;color:#000;transform:scaleX(0.9654);">1.8</span><span class="t" style="left:177.2px;top:1149.2px;font-size:19.0px;color:#000;transform:scaleX(0.9779);">IM:CircStructThickness</span><span class="t" style="left:425.0px;top:1149.2px;font-size:19.0px;color:#000;transform:scaleX(0.9735);">0.07</span><span class="t" style="left:177.2px;top:1172.1px;font-size:19.0px;color:#000;transform:scaleX(0.9948);">IM:CircStructBottomThick...</span><span class="t" style="left:425.0px;top:1172.1px;font-size:19.0px;color:#000;transform:scaleX(0.9654);">0.1</span><span class="t" style="left:177.2px;top:1195.1px;font-size:19.0px;color:#000;transform:scaleX(1.0100);">IM:heightDeposit</span><span class="t" style="left:425.0px;top:1195.1px;font-size:19.0px;color:#000;transform:scaleX(0.9340);">NaN</span><span class="t" style="left:177.2px;top:1218.1px;font-size:19.0px;color:#000;transform:scaleX(0.9930);">IM:volumeDeposit</span><span class="t" style="left:425.0px;top:1218.1px;font-size:19.0px;color:#000;transform:scaleX(0.9340);">NaN</span><span class="t" style="left:177.2px;top:1241.1px;font-size:19.0px;color:#000;transform:scaleX(1.0271);">IM:rimType</span><span class="t" style="left:425.0px;top:1241.1px;font-size:19.0px;color:#000;transform:scaleX(0.9903);">ritilä</span><span class="t" style="left:177.2px;top:1264.1px;font-size:19.0px;color:#000;transform:scaleX(1.0138);">IM:rimMaterial</span><span class="t" style="left:425.0px;top:1264.1px;font-size:19.0px;color:#000;transform:scaleX(0.9946);">Valurauta</span><span class="t" style="left:177.2px;top:1287.0px;font-size:19.0px;color:#000;">IM:rimLoad</span><span class="t" style="left:425.0px;top:1287.0px;font-size:19.0px;color:#000;transform:scaleX(0.9305);">250</span><span class="t" style="left:177.2px;top:1310.0px;font-size:19.0px;color:#000;transform:scaleX(1.0166);">IM:rimDiameter</span><span class="t" style="left:425.0px;top:1310.0px;font-size:19.0px;color:#000;transform:scaleX(0.9654);">0.6</span><div class="b" style="left:706.0px;top:1076.5px;width:29.8px;height:254.2px;background:#f0f0f0;"></div><div class="b" style="left:706.0px;top:1215.2px;width:28.0px;height:84.2px;background:#cdcdcd;"></div><svg style="position:absolute;left:706px;top:1077px" width="30" height="254" viewBox="706 1077 30 254"><path d="M715,1097.5 L720.5,1092 L726,1097.5" fill="none" stroke="#606060" stroke-width="2.2"/><path d="M715,1312.5 L720.5,1318 L726,1312.5" fill="none" stroke="#606060" stroke-width="2.2"/></svg><div class="b" style="left:174.1px;top:1340.7px;width:129.5px;height:31.7px;background:#e1e1e1;border:1px solid #adadad;"></div><span class="t" style="left:209.8px;top:1349.4px;font-size:19.0px;color:#000;">Lisää *</span><div class="b" style="left:318.2px;top:1340.7px;width:129.5px;height:31.7px;background:#e1e1e1;border:1px solid #adadad;"></div><span class="t" style="left:359.2px;top:1349.4px;font-size:19.0px;color:#000;">Editoi</span><div class="b" style="left:462.3px;top:1340.7px;width:129.5px;height:31.7px;background:#e1e1e1;border:1px solid #adadad;"></div><span class="t" style="left:494.3px;top:1349.4px;font-size:19.0px;color:#000;">Poista *</span><div class="b" style="left:606.1px;top:1340.7px;width:129.5px;height:31.7px;background:#e1e1e1;border:1px solid #adadad;"></div><span class="t" style="left:639.7px;top:1349.4px;font-size:19.0px;color:#000;">Näytä *</span><div class="b" style="left:762.0px;top:892.3px;width:129.8px;height:32.2px;background:#e1e1e1;border:1px solid #adadad;"></div><span class="t" style="left:791.5px;top:901.2px;font-size:19.0px;color:#000;">Tallenna</span><div class="b" style="left:762.0px;top:938.2px;width:129.8px;height:32.4px;background:#e1e1e1;border:1px solid #adadad;"></div><span class="t" style="left:805.8px;top:947.2px;font-size:19.0px;color:#000;">Sulje</span><div class="b" style="left:762.0px;top:984.1px;width:129.8px;height:32.4px;background:#e1e1e1;border:1px solid #adadad;"></div><span class="t" style="left:800.5px;top:993.1px;font-size:19.0px;color:#000;">Ohje *</span><div class="b" style="left:762.0px;top:1041.4px;width:129.8px;height:32.0px;background:#e1e1e1;border:1px solid #adadad;"></div><span class="t" style="left:796.3px;top:1050.2px;font-size:19.0px;color:#000;">Koodi *</span><div class="b" style="left:762.0px;top:1087.3px;width:129.8px;height:32.3px;background:#e1e1e1;border:1px solid #adadad;"></div><span class="t" style="left:798.9px;top:1096.3px;font-size:19.0px;color:#000;">Piirto *</span><div class="b" style="left:762.0px;top:1145.7px;width:129.8px;height:31.6px;background:#e1e1e1;border:1px solid #adadad;"></div><span class="t" style="left:801.6px;top:1154.3px;font-size:19.0px;color:#000;">Uusi *</span><div class="b" style="left:762.0px;top:1191.3px;width:129.8px;height:32.0px;background:#e1e1e1;border:1px solid #adadad;"></div><span class="t" style="left:794.2px;top:1200.1px;font-size:19.0px;color:#000;">Poista *</span><div class="b" style="left:762.0px;top:1248.8px;width:129.8px;height:31.6px;background:#e1e1e1;border:1px solid #adadad;"></div><span class="t" style="left:790.5px;top:1257.4px;font-size:19.0px;color:#000;">Suunta *</span><span class="t" style="left:172.9px;top:1410.5px;font-size:19.0px;color:#000;transform:scaleX(0.9699);">Tiedosto</span><div class="b" style="left:269.1px;top:1397.2px;width:479.2px;height:34.2px;background:#f0f0f0;border:1px solid #7a7a7a;"></div><span class="t" style="left:276.9px;top:1403.1px;font-size:19.0px;color:#000;">G:\Jaetut Drivet\...\2_esimerkki\Hulevesi_verkosto.gt</span><div class="b" style="left:761.0px;top:1397.2px;width:95.7px;height:34.2px;background:#f0f0f0;border:1px solid #7a7a7a;"></div><div class="b" style="left:858.3px;top:1398.8px;width:33.2px;height:31.6px;background:#e1e1e1;border:1px solid #adadad;"></div><span class="t" style="left:868.6px;top:1407.4px;font-size:19.0px;color:#000;">X</span>
<div class="b" style="left:952.0px;top:724.0px;width:696.0px;height:1284.0px;background:#f0f0f0;border:1px solid #0088c9;box-shadow:0 4px 16px rgba(0,0,0,0.35),0 0 3px rgba(0,0,0,0.2);"></div><div class="b" style="left:952.0px;top:724.0px;width:696.0px;height:52.0px;background:#0088c9;"></div><span class="t" style="left:966.6px;top:741.0px;font-size:21px;color:#fff;transform:scaleX(0.9766);">Putkiverkko</span><svg style="position:absolute;left:1606px;top:738px" width="26" height="26" viewBox="1606 738 26 26"><path d="M1611,743 L1626.5,758.5 M1626.5,743 L1611,758.5" stroke="#fff" stroke-width="1.5"/></svg><div class="b" style="left:965.0px;top:789.0px;width:545.6px;height:103.0px;border:1px solid #fff;border-left-color:transparent;border-top-color:transparent;"></div><div class="b" style="left:965.0px;top:789.0px;width:544.6px;height:102.0px;border:1px solid #6d6d6d;box-shadow:inset 1px 1px 0 #fff;"></div><div class="b" style="left:965.0px;top:905.3px;width:545.6px;height:197.3px;border:1px solid #fff;border-left-color:transparent;border-top-color:transparent;"></div><div class="b" style="left:965.0px;top:905.3px;width:544.6px;height:196.3px;border:1px solid #6d6d6d;box-shadow:inset 1px 1px 0 #fff;"></div><div class="b" style="left:965.0px;top:1115.0px;width:545.6px;height:382.3px;border:1px solid #fff;border-left-color:transparent;border-top-color:transparent;"></div><div class="b" style="left:965.0px;top:1115.0px;width:544.6px;height:381.3px;border:1px solid #6d6d6d;box-shadow:inset 1px 1px 0 #fff;"></div><div class="b" style="left:965.0px;top:1510.4px;width:545.6px;height:195.6px;border:1px solid #fff;border-left-color:transparent;border-top-color:transparent;"></div><div class="b" style="left:965.0px;top:1510.4px;width:544.6px;height:194.6px;border:1px solid #6d6d6d;box-shadow:inset 1px 1px 0 #fff;"></div><div class="b" style="left:965.0px;top:1719.5px;width:545.6px;height:149.9px;border:1px solid #fff;border-left-color:transparent;border-top-color:transparent;"></div><div class="b" style="left:965.0px;top:1719.5px;width:544.6px;height:148.9px;border:1px solid #6d6d6d;box-shadow:inset 1px 1px 0 #fff;"></div><div class="b" style="left:965.0px;top:1882.4px;width:545.6px;height:114.1px;border:1px solid #fff;border-left-color:transparent;border-top-color:transparent;"></div><div class="b" style="left:965.0px;top:1882.4px;width:544.6px;height:113.1px;border:1px solid #6d6d6d;box-shadow:inset 1px 1px 0 #fff;"></div><div class="b" style="left:1257.0px;top:799.0px;width:244.0px;height:31.7px;background:#e1e1e1;border:1px solid #bcbcbc;"></div><svg style="position:absolute;left:1476.0px;top:809.4px" width="16" height="12" viewBox="-8 -6 16 12"><path d="M-4.8,-2.4 L0,2.4 L4.8,-2.4" fill="none" stroke="#4a4a4a" stroke-width="1.3"/></svg><span class="t" style="left:973.9px;top:814.8px;font-size:19.0px;color:#000;">Putkiverkon tyyppi</span><div class="b" style="left:1257.0px;top:846.4px;width:244.0px;height:30.4px;background:#e1e1e1;border:1px solid #bcbcbc;"></div><svg style="position:absolute;left:1476.0px;top:856.1px" width="16" height="12" viewBox="-8 -6 16 12"><path d="M-4.8,-2.4 L0,2.4 L4.8,-2.4" fill="none" stroke="#4a4a4a" stroke-width="1.3"/></svg><span class="t" style="left:973.9px;top:860.9px;font-size:19.0px;color:#000;transform:scaleX(0.9857);">Putkiverkon tila</span><div class="b" style="left:1257.0px;top:916.3px;width:244.0px;height:30.4px;background:#fff;border:1px solid #7a7a7a;"></div><svg style="position:absolute;left:1476.0px;top:926.0px" width="16" height="12" viewBox="-8 -6 16 12"><path d="M-4.8,-2.4 L0,2.4 L4.8,-2.4" fill="none" stroke="#4a4a4a" stroke-width="1.3"/></svg><span class="t" style="left:973.9px;top:930.8px;font-size:19.0px;color:#000;transform:scaleX(0.9945);">Putken materiaali</span><div class="b" style="left:1257.0px;top:962.4px;width:244.0px;height:30.4px;background:#fff;border:1px solid #7a7a7a;"></div><svg style="position:absolute;left:1476.0px;top:972.1px" width="16" height="12" viewBox="-8 -6 16 12"><path d="M-4.8,-2.4 L0,2.4 L4.8,-2.4" fill="none" stroke="#4a4a4a" stroke-width="1.3"/></svg><span class="t" style="left:973.9px;top:977.1px;font-size:19.0px;color:#000;transform:scaleX(0.9819);">Putken halkaisija</span><div class="b" style="left:1257.0px;top:1009.4px;width:244.0px;height:30.4px;background:#fff;border:1px solid #7a7a7a;"></div><svg style="position:absolute;left:1476.0px;top:1019.1px" width="16" height="12" viewBox="-8 -6 16 12"><path d="M-4.8,-2.4 L0,2.4 L4.8,-2.4" fill="none" stroke="#4a4a4a" stroke-width="1.3"/></svg><span class="t" style="left:973.9px;top:1023.9px;font-size:19.0px;color:#000;transform:scaleX(0.9871);">Putken seinämän paksuus</span><div class="b" style="left:1257.0px;top:1055.5px;width:244.0px;height:30.3px;background:#e1e1e1;border:1px solid #bcbcbc;"></div><svg style="position:absolute;left:1476.0px;top:1065.2px" width="16" height="12" viewBox="-8 -6 16 12"><path d="M-4.8,-2.4 L0,2.4 L4.8,-2.4" fill="none" stroke="#4a4a4a" stroke-width="1.3"/></svg><span class="t" style="left:973.9px;top:1069.6px;font-size:19.0px;color:#000;transform:scaleX(1.0044);">Putken korkeuden tyyppi</span><div class="b" style="left:1257.0px;top:1128.2px;width:244.0px;height:30.4px;background:#fff;border:1px solid #7a7a7a;"></div><svg style="position:absolute;left:1476.0px;top:1137.9px" width="16" height="12" viewBox="-8 -6 16 12"><path d="M-4.8,-2.4 L0,2.4 L4.8,-2.4" fill="none" stroke="#4a4a4a" stroke-width="1.3"/></svg><span class="t" style="left:973.9px;top:1144.4px;font-size:19.0px;color:#000;transform:scaleX(0.9743);">Kaivon koodi</span><div class="b" style="left:1257.0px;top:1174.3px;width:244.0px;height:30.7px;background:#fff;border:1px solid #7a7a7a;"></div><svg style="position:absolute;left:1476.0px;top:1184.2px" width="16" height="12" viewBox="-8 -6 16 12"><path d="M-4.8,-2.4 L0,2.4 L4.8,-2.4" fill="none" stroke="#4a4a4a" stroke-width="1.3"/></svg><span class="t" style="left:973.9px;top:1188.9px;font-size:19.0px;color:#000;transform:scaleX(0.9880);">Kaivon materiaali</span><div class="b" style="left:1257.0px;top:1221.0px;width:244.0px;height:30.5px;background:#fff;border:1px solid #7a7a7a;"></div><svg style="position:absolute;left:1476.0px;top:1230.8px" width="16" height="12" viewBox="-8 -6 16 12"><path d="M-4.8,-2.4 L0,2.4 L4.8,-2.4" fill="none" stroke="#4a4a4a" stroke-width="1.3"/></svg><span class="t" style="left:973.9px;top:1234.7px;font-size:19.0px;color:#000;transform:scaleX(0.9751);">Kaivon halkaisija</span><div class="b" style="left:1257.0px;top:1267.4px;width:244.0px;height:30.6px;background:#fff;border:1px solid #7a7a7a;"></div><svg style="position:absolute;left:1476.0px;top:1277.2px" width="16" height="12" viewBox="-8 -6 16 12"><path d="M-4.8,-2.4 L0,2.4 L4.8,-2.4" fill="none" stroke="#4a4a4a" stroke-width="1.3"/></svg><span class="t" style="left:973.9px;top:1281.4px;font-size:19.0px;color:#000;transform:scaleX(0.9828);">Kaivon seinämän paksuus</span><div class="b" style="left:1257.0px;top:1314.0px;width:244.0px;height:30.5px;background:#fff;border:1px solid #7a7a7a;"></div><svg style="position:absolute;left:1476.0px;top:1323.8px" width="16" height="12" viewBox="-8 -6 16 12"><path d="M-4.8,-2.4 L0,2.4 L4.8,-2.4" fill="none" stroke="#4a4a4a" stroke-width="1.3"/></svg><span class="t" style="left:973.9px;top:1330.9px;font-size:19.0px;color:#000;transform:scaleX(0.9701);">Kaivon syvyys ominaisuudesta</span><div class="b" style="left:1257.0px;top:1360.0px;width:244.0px;height:31.0px;background:#fff;border:1px solid #7a7a7a;"></div><svg style="position:absolute;left:1476.0px;top:1370.0px" width="16" height="12" viewBox="-8 -6 16 12"><path d="M-4.8,-2.4 L0,2.4 L4.8,-2.4" fill="none" stroke="#4a4a4a" stroke-width="1.3"/></svg><span class="t" style="left:973.9px;top:1374.9px;font-size:19.0px;color:#000;transform:scaleX(0.9470);">Kaivon syvyys</span><div class="b" style="left:1257.0px;top:1407.0px;width:244.0px;height:30.5px;background:#fff;border:1px solid #7a7a7a;"></div><svg style="position:absolute;left:1476.0px;top:1416.8px" width="16" height="12" viewBox="-8 -6 16 12"><path d="M-4.8,-2.4 L0,2.4 L4.8,-2.4" fill="none" stroke="#4a4a4a" stroke-width="1.3"/></svg><span class="t" style="left:973.9px;top:1420.3px;font-size:19.0px;color:#000;transform:scaleX(0.9695);">Sakkapesän korkeus</span><div class="b" style="left:1257.0px;top:1450.5px;width:244.0px;height:30.5px;background:#fff;border:1px solid #7a7a7a;"></div><svg style="position:absolute;left:1476.0px;top:1460.2px" width="16" height="12" viewBox="-8 -6 16 12"><path d="M-4.8,-2.4 L0,2.4 L4.8,-2.4" fill="none" stroke="#4a4a4a" stroke-width="1.3"/></svg><span class="t" style="left:973.9px;top:1465.8px;font-size:19.0px;color:#000;transform:scaleX(0.9762);">Pohjan paksuus</span><div class="b" style="left:1257.0px;top:1523.6px;width:244.0px;height:30.9px;background:#fff;border:1px solid #7a7a7a;"></div><svg style="position:absolute;left:1476.0px;top:1533.5px" width="16" height="12" viewBox="-8 -6 16 12"><path d="M-4.8,-2.4 L0,2.4 L4.8,-2.4" fill="none" stroke="#4a4a4a" stroke-width="1.3"/></svg><span class="t" style="left:973.9px;top:1540.7px;font-size:19.0px;color:#000;transform:scaleX(1.0048);">Kannen tyyppi</span><div class="b" style="left:1257.0px;top:1570.3px;width:244.0px;height:30.2px;background:#fff;border:1px solid #7a7a7a;"></div><svg style="position:absolute;left:1476.0px;top:1579.9px" width="16" height="12" viewBox="-8 -6 16 12"><path d="M-4.8,-2.4 L0,2.4 L4.8,-2.4" fill="none" stroke="#4a4a4a" stroke-width="1.3"/></svg><span class="t" style="left:973.9px;top:1586.8px;font-size:19.0px;color:#000;">Kannen materiaali</span><div class="b" style="left:1257.0px;top:1616.4px;width:244.0px;height:31.0px;background:#fff;border:1px solid #7a7a7a;"></div><svg style="position:absolute;left:1476.0px;top:1626.4px" width="16" height="12" viewBox="-8 -6 16 12"><path d="M-4.8,-2.4 L0,2.4 L4.8,-2.4" fill="none" stroke="#4a4a4a" stroke-width="1.3"/></svg><span class="t" style="left:973.9px;top:1633.2px;font-size:19.0px;color:#000;transform:scaleX(0.9843);">Kannen kantavuusluokka</span><div class="b" style="left:1257.0px;top:1660.3px;width:244.0px;height:30.2px;background:#fff;border:1px solid #7a7a7a;"></div><svg style="position:absolute;left:1476.0px;top:1669.9px" width="16" height="12" viewBox="-8 -6 16 12"><path d="M-4.8,-2.4 L0,2.4 L4.8,-2.4" fill="none" stroke="#4a4a4a" stroke-width="1.3"/></svg><span class="t" style="left:973.9px;top:1677.1px;font-size:19.0px;color:#000;transform:scaleX(0.9870);">Kannen halkaisija</span><div class="b" style="left:1257.0px;top:1732.7px;width:244.0px;height:30.8px;background:#fff;border:1px solid #7a7a7a;"></div><svg style="position:absolute;left:1476.0px;top:1742.6px" width="16" height="12" viewBox="-8 -6 16 12"><path d="M-4.8,-2.4 L0,2.4 L4.8,-2.4" fill="none" stroke="#4a4a4a" stroke-width="1.3"/></svg><span class="t" style="left:973.9px;top:1749.2px;font-size:19.0px;color:#000;transform:scaleX(0.9866);">Tilavarausinfo</span><div class="b" style="left:1257.0px;top:1779.4px;width:244.0px;height:30.4px;background:#fff;border:1px solid #7a7a7a;"></div><svg style="position:absolute;left:1476.0px;top:1789.1px" width="16" height="12" viewBox="-8 -6 16 12"><path d="M-4.8,-2.4 L0,2.4 L4.8,-2.4" fill="none" stroke="#4a4a4a" stroke-width="1.3"/></svg><span class="t" style="left:973.9px;top:1795.2px;font-size:19.0px;color:#000;transform:scaleX(0.9777);">Tilavaraus</span><div class="b" style="left:1257.0px;top:1825.8px;width:244.0px;height:30.7px;background:#fff;border:1px solid #7a7a7a;"></div><svg style="position:absolute;left:1476.0px;top:1835.7px" width="16" height="12" viewBox="-8 -6 16 12"><path d="M-4.8,-2.4 L0,2.4 L4.8,-2.4" fill="none" stroke="#4a4a4a" stroke-width="1.3"/></svg><span class="t" style="left:973.9px;top:1841.6px;font-size:19.0px;color:#000;transform:scaleX(0.9594);">Varoetäisyys</span><div class="b" style="left:1257.2px;top:1892.4px;width:243.4px;height:35.0px;background:#fff;border:1px solid #7a7a7a;"></div><span class="t" style="left:1265.6px;top:1897.2px;font-size:19.0px;color:#000;transform:scaleX(0.9675);">0.500</span><span class="t" style="left:973.9px;top:1909.8px;font-size:19.0px;color:#000;transform:scaleX(0.9861);">Putken ja kaivon hakuetäisyys</span><div class="b" style="left:974.0px;top:1955.3px;width:20.0px;height:19.5px;background:#fff;border:1px solid #333;"></div><span class="t" style="left:999.5px;top:1956.5px;font-size:19.0px;color:#000;">Ylikirjoita ominaisuudet</span><div class="b" style="left:1521.5px;top:789.0px;width:109.5px;height:33.5px;background:#e1e1e1;border:2px solid #0078d7;"></div><span class="t" style="left:1546.2px;top:798.2px;font-size:19.0px;color:#000;">Suorita</span><div class="b" style="left:1522.0px;top:836.0px;width:108.6px;height:32.6px;background:#e1e1e1;border:1px solid #adadad;"></div><span class="t" style="left:1555.2px;top:845.1px;font-size:19.0px;color:#000;">Sulje</span><div class="b" style="left:1522.0px;top:882.0px;width:108.6px;height:33.6px;background:#e1e1e1;border:1px solid #adadad;"></div><span class="t" style="left:1549.9px;top:891.6px;font-size:19.0px;color:#000;">Ohje *</span><div class="b" style="left:1522.0px;top:1777.8px;width:108.6px;height:32.0px;background:#e1e1e1;border:1px solid #adadad;"></div><span class="t" style="left:1536.7px;top:1786.6px;font-size:19.0px;color:#000;">3D-esitys</span><div class="b" style="left:1522.0px;top:1823.6px;width:108.6px;height:32.9px;background:#e1e1e1;border:1px solid #adadad;"></div><span class="t" style="left:1543.0px;top:1832.9px;font-size:19.0px;color:#000;">Putket *</span><div class="b" style="left:1522.0px;top:1870.4px;width:108.6px;height:32.2px;background:#e1e1e1;border:1px solid #adadad;"></div><span class="t" style="left:1543.6px;top:1879.3px;font-size:19.0px;color:#000;">Kaivot *</span><div class="b" style="left:1522.0px;top:1916.5px;width:108.6px;height:32.9px;background:#e1e1e1;border:1px solid #adadad;"></div><span class="t" style="left:1546.4px;top:1925.8px;font-size:19.0px;color:#000;">Vienti *</span><div class="b" style="left:1522.0px;top:1963.4px;width:108.6px;height:32.1px;background:#e1e1e1;border:1px solid #adadad;"></div><span class="t" style="left:1549.4px;top:1972.3px;font-size:19.0px;color:#000;">Nollaa</span>
<div class="b" style="left:1749.4px;top:362.0px;width:1771.6px;height:1271.5px;background:#fff;border:1px solid #0088c9;box-shadow:0 2px 10px rgba(0,0,0,0.06);"></div><div class="b" style="left:1749.4px;top:362.0px;width:1771.6px;height:51.6px;background:#0088c9;"></div><svg style="position:absolute;left:1763px;top:377px" width="26" height="22" viewBox="1763 377 26 22"><defs><linearGradient id="ig" x1="0" y1="0" x2="1" y2="1"><stop offset="0" stop-color="#3a8a70"/><stop offset="1" stop-color="#a8d0a0"/></linearGradient></defs><rect x="1763.5" y="378" width="24" height="19.5" fill="#f4f4f4" stroke="#c8c8c8" stroke-width="1"/><rect x="1765" y="380" width="12.5" height="15" fill="url(#ig)"/><rect x="1779" y="380" width="3" height="8" fill="#d0d0d0"/><rect x="1783.5" y="380" width="2.5" height="10" fill="#888"/></svg><span class="t" style="left:1795.8px;top:379.4px;font-size:21px;color:#fff;transform:scaleX(0.9676);">3D katselu</span><svg style="position:absolute;left:3300px;top:375px" width="200" height="28" viewBox="3300 375 200 28"><path d="M3310,388.4 H3325" stroke="#fff" stroke-width="1.4"/><rect x="3391.5" y="381.5" width="14.5" height="14.5" fill="none" stroke="#fff" stroke-width="1.4"/><path d="M3472.4,381.4 L3486.8,395.8 M3486.8,381.4 L3472.4,395.8" stroke="#fff" stroke-width="1.4"/></svg><div class="b" style="left:1750.4px;top:413.6px;width:1769.6px;height:35.9px;background:#fff;border-bottom:1px solid #e8e8e8;"></div><span class="t" style="left:1758.8px;top:423.4px;font-size:21px;color:#000;transform:scaleX(0.9778);">Tiedosto</span><span class="t" style="left:1853.5px;top:423.4px;font-size:21px;color:#000;transform:scaleX(0.9843);">Näytä</span><span class="t" style="left:1924.3px;top:423.4px;font-size:21px;color:#000;transform:scaleX(0.9806);">Ohje</span><svg style="position:absolute;left:1750.4px;top:450px" width="1426.3" height="1182.5" viewBox="1750.4 450 1426.3 1182.5"><path d="M2040,540 H2163 L2340,644 V712" fill="none" stroke="#303030" stroke-width="28" stroke-linejoin="round"/><path d="M2042,531 H2160 M2046,538 H2150 M2050,546 H2163 M2044,551 H2120" stroke="#0084c8" stroke-width="1.2" stroke-dasharray="9 14 3 22 14 9" fill="none"/><path d="M2166,532 L2343,636 M2163,541 L2338,645 M2160,549 L2330,650" stroke="#0084c8" stroke-width="1.3" stroke-dasharray="2 7 1 11 3 5" fill="none"/><path d="M2332,650 V705 M2338,646 V705 M2345,650 V705 M2350,655 V705" stroke="#0084c8" stroke-width="1.2" stroke-dasharray="3 6 1 9 5 4" fill="none"/><path d="M2701.9,687.9 V927.4 A100.8,64.7 0 0 0 2903.5,927.4 V687.9 Z" fill="#858585"/><path d="M2701.9,687.9 V913.4 A100.8,64.7 0 0 0 2903.5,913.4 V687.9 Z" fill="#0000f4"/><path d="M2701.9,687.9 V857.0 A100.8,64.7 0 0 0 2903.5,857.0 V687.9 Z" fill="#0084c8"/><clipPath id="u1"><path d="M2701.9,687.9 V927.4 A100.8,64.7 0 0 0 2903.5,927.4 V687.9 Z"/></clipPath><g clip-path="url(#u1)"><path d="M2903.4,691.1 V930.6 M2903.4,691.1 L2901.5,869.8 M2901.5,869.8 L2903.4,916.6 M2901.5,926.2 L2903.4,930.6 M2901.5,700.7 V940.2 M2901.5,700.7 L2897.4,879.1 M2897.4,879.1 L2901.5,926.2 M2897.4,935.5 L2901.5,940.2 M2897.4,710.0 V949.5 M2897.4,710.0 L2891.2,888.0 M2891.2,888.0 L2897.4,935.5 M2891.2,944.4 L2897.4,949.5 M2891.2,718.9 V958.4 M2891.2,718.9 L2883.0,896.1 M2883.0,896.1 L2891.2,944.4 M2883.0,952.5 L2891.2,958.4 M2883.0,727.0 V966.5 M2883.0,727.0 L2873.1,903.3 M2873.1,903.3 L2883.0,952.5 M2873.1,959.7 L2883.0,966.5 M2873.1,734.2 V973.7 M2873.1,734.2 L2861.5,909.5 M2861.5,909.5 L2873.1,959.7 M2861.5,965.9 L2873.1,973.7 M2861.5,740.4 V979.9 M2861.5,740.4 L2848.7,914.6 M2848.7,914.6 L2861.5,965.9 M2848.7,971.0 L2861.5,979.9 M2848.7,745.5 V985.0 M2848.7,745.5 L2834.8,918.3 M2834.8,918.3 L2848.7,971.0 M2834.8,974.7 L2848.7,985.0 M2834.8,749.2 V988.7 M2834.8,749.2 L2820.2,920.7 M2820.2,920.7 L2834.8,974.7 M2820.2,977.1 L2834.8,988.7 M2820.2,751.6 V991.1 M2820.2,751.6 L2805.2,921.7 M2805.2,921.7 L2820.2,977.1 M2805.2,978.1 L2820.2,991.1 M2805.2,752.6 V992.1 M2805.2,752.6 L2790.2,921.2 M2790.2,921.2 L2805.2,978.1 M2790.2,977.6 L2805.2,992.1 M2790.2,752.1 V991.6 M2790.2,752.1 L2775.4,919.3 M2775.4,919.3 L2790.2,977.6 M2775.4,975.7 L2790.2,991.6 M2775.4,750.2 V989.7 M2775.4,750.2 L2761.2,916.0 M2761.2,916.0 L2775.4,975.7 M2761.2,972.4 L2775.4,989.7 M2761.2,746.9 V986.4 M2761.2,746.9 L2748.0,911.3 M2748.0,911.3 L2761.2,972.4 M2748.0,967.7 L2761.2,986.4 M2748.0,742.2 V981.7 M2748.0,742.2 L2736.0,905.5 M2736.0,905.5 L2748.0,967.7 M2736.0,961.9 L2748.0,981.7 M2736.0,736.4 V975.9 M2736.0,736.4 L2725.5,898.6 M2725.5,898.6 L2736.0,961.9 M2725.5,955.0 L2736.0,975.9 M2725.5,729.5 V969.0 M2725.5,729.5 L2716.7,890.7 M2716.7,890.7 L2725.5,955.0 M2716.7,947.1 L2725.5,969.0 M2716.7,721.6 V961.1 M2716.7,721.6 L2709.8,882.1 M2709.8,882.1 L2716.7,947.1 M2709.8,938.5 L2716.7,961.1 M2709.8,713.0 V952.5 M2709.8,713.0 L2705.0,873.0 M2705.0,873.0 L2709.8,938.5 M2705.0,929.4 L2709.8,952.5 M2705.0,703.9 V943.4 M2705.0,703.9 L2702.4,863.4 M2702.4,863.4 L2705.0,929.4 M2702.4,919.8 L2705.0,943.4 M2702.4,694.3 V933.8" stroke="#2b2b2b" stroke-width="1" fill="none" shape-rendering="crispEdges"/><path d="M2701.9,857.0 A100.8,64.7 0 0 0 2903.5,857.0" stroke="#2b2b2b" stroke-width="1.3" fill="none"/><path d="M2701.9,913.4 A100.8,64.7 0 0 0 2903.5,913.4" stroke="#2b2b2b" stroke-width="1.3" fill="none"/></g><path d="M2701.9,687.9 V927.4 A100.8,64.7 0 0 0 2903.5,927.4 V687.9" stroke="#2b2b2b" stroke-width="1.6" fill="none"/><ellipse cx="2802.7" cy="687.9" rx="100.8" ry="64.7" fill="#00a0f0" stroke="#2b2b2b" stroke-width="1.6"/><path d="M2903.4,691.1 L2893.2,690.8 M2903.4,691.1 L2891.5,699.5 M2901.5,700.7 L2891.5,699.5 M2901.5,700.7 L2887.8,707.9 M2897.4,710.0 L2887.8,707.9 M2897.4,710.0 L2882.3,715.8 M2891.2,718.9 L2882.3,715.8 M2891.2,718.9 L2874.9,723.2 M2883.0,727.0 L2874.9,723.2 M2883.0,727.0 L2866.0,729.7 M2873.1,734.2 L2866.0,729.7 M2873.1,734.2 L2855.6,735.3 M2861.5,740.4 L2855.6,735.3 M2861.5,740.4 L2844.0,739.9 M2848.7,745.5 L2844.0,739.9 M2848.7,745.5 L2831.5,743.3 M2834.8,749.2 L2831.5,743.3 M2834.8,749.2 L2818.4,745.4 M2820.2,751.6 L2818.4,745.4 M2820.2,751.6 L2804.9,746.3 M2805.2,752.6 L2804.9,746.3 M2805.2,752.6 L2791.4,745.8 M2790.2,752.1 L2791.4,745.8 M2790.2,752.1 L2778.2,744.1 M2775.4,750.2 L2778.2,744.1 M2775.4,750.2 L2765.4,741.1 M2761.2,746.9 L2765.4,741.1 M2761.2,746.9 L2753.5,737.0 M2748.0,742.2 L2753.5,737.0 M2748.0,742.2 L2742.7,731.7 M2736.0,736.4 L2742.7,731.7 M2736.0,736.4 L2733.3,725.4 M2725.5,729.5 L2733.3,725.4 M2725.5,729.5 L2725.4,718.3 M2716.7,721.6 L2725.4,718.3 M2716.7,721.6 L2719.2,710.6 M2709.8,713.0 L2719.2,710.6 M2709.8,713.0 L2714.9,702.3 M2705.0,703.9 L2714.9,702.3 M2705.0,703.9 L2712.5,693.7 M2702.4,694.3 L2712.5,693.7 M2702.4,694.3 L2712.2,685.0 M2702.0,684.7 L2712.2,685.0 M2702.0,684.7 L2713.9,676.3 M2703.9,675.1 L2713.9,676.3 M2703.9,675.1 L2717.6,667.9 M2708.0,665.8 L2717.6,667.9 M2708.0,665.8 L2723.1,660.0 M2714.2,656.9 L2723.1,660.0 M2714.2,656.9 L2730.5,652.6 M2722.4,648.8 L2730.5,652.6 M2722.4,648.8 L2739.4,646.1 M2732.3,641.6 L2739.4,646.1 M2732.3,641.6 L2749.8,640.5 M2743.9,635.4 L2749.8,640.5 M2743.9,635.4 L2761.4,635.9 M2756.7,630.3 L2761.4,635.9 M2756.7,630.3 L2773.9,632.5 M2770.6,626.6 L2773.9,632.5 M2770.6,626.6 L2787.0,630.4 M2785.2,624.2 L2787.0,630.4 M2785.2,624.2 L2800.5,629.5 M2800.2,623.2 L2800.5,629.5 M2800.2,623.2 L2814.0,630.0 M2815.2,623.7 L2814.0,630.0 M2815.2,623.7 L2827.2,631.7 M2830.0,625.6 L2827.2,631.7 M2830.0,625.6 L2840.0,634.7 M2844.2,628.9 L2840.0,634.7 M2844.2,628.9 L2851.9,638.8 M2857.4,633.6 L2851.9,638.8 M2857.4,633.6 L2862.7,644.1 M2869.4,639.4 L2862.7,644.1 M2869.4,639.4 L2872.1,650.4 M2879.9,646.3 L2872.1,650.4 M2879.9,646.3 L2880.0,657.5 M2888.7,654.2 L2880.0,657.5 M2888.7,654.2 L2886.2,665.2 M2895.6,662.8 L2886.2,665.2 M2895.6,662.8 L2890.5,673.5 M2900.4,671.9 L2890.5,673.5 M2900.4,671.9 L2892.9,682.1 M2903.0,681.5 L2892.9,682.1 M2903.0,681.5 L2893.2,690.8" stroke="#2b2b2b" stroke-width="0.8" fill="none"/><clipPath id="u2"><ellipse cx="2802.7" cy="687.9" rx="90.6" ry="58.4"/></clipPath><ellipse cx="2802.7" cy="687.9" rx="90.6" ry="58.4" fill="#0084c8"/><g clip-path="url(#u2)"><path d="M2893.2,690.8 V873.2 M2891.5,699.5 L2893.2,886.1 M2712.2,685.0 V867.3 M2713.9,676.3 L2712.2,880.3 M2713.9,676.3 V858.7 M2717.6,667.9 L2713.9,871.6 M2717.6,667.9 V850.3 M2723.1,660.0 L2717.6,863.2 M2723.1,660.0 V842.3 M2730.5,652.6 L2723.1,855.2 M2730.5,652.6 V835.0 M2739.4,646.1 L2730.5,847.9 M2739.4,646.1 V828.4 M2749.8,640.5 L2739.4,841.4 M2749.8,640.5 V822.8 M2761.4,635.9 L2749.8,835.8 M2761.4,635.9 V818.3 M2773.9,632.5 L2761.4,831.2 M2773.9,632.5 V814.9 M2787.0,630.4 L2773.9,827.8 M2787.0,630.4 V812.7 M2800.5,629.5 L2787.0,825.7 M2800.5,629.5 V811.9 M2814.0,630.0 L2800.5,824.8 M2814.0,630.0 V812.3 M2827.2,631.7 L2814.0,825.2 M2827.2,631.7 V814.0 M2840.0,634.7 L2827.2,827.0 M2840.0,634.7 V817.0 M2851.9,638.8 L2840.0,830.0 M2851.9,638.8 V821.2 M2862.7,644.1 L2851.9,834.1 M2862.7,644.1 V826.5 M2872.1,650.4 L2862.7,839.4 M2872.1,650.4 V832.7 M2880.0,657.5 L2872.1,845.6 M2880.0,657.5 V839.8 M2886.2,665.2 L2880.0,852.7 M2886.2,665.2 V847.6 M2890.5,673.5 L2886.2,860.5 M2890.5,673.5 V855.8 M2892.9,682.1 L2890.5,868.8 M2892.9,682.1 V864.4 M2893.2,690.8 L2892.9,877.4" stroke="#2b2b2b" stroke-width="1" fill="none" shape-rendering="crispEdges"/></g><ellipse cx="2802.7" cy="687.9" rx="90.6" ry="58.4" fill="none" stroke="#2b2b2b" stroke-width="1.6"/><linearGradient id="u3" gradientUnits="userSpaceOnUse" x1="2615.0" y1="787.5" x2="2640.7" y2="913.0"><stop offset="0" stop-color="#0a90dc"/><stop offset="0.12" stop-color="#00a0f0"/><stop offset="0.4" stop-color="#0098e6"/><stop offset="0.7" stop-color="#0088d0"/><stop offset="1" stop-color="#0078bc"/></linearGradient><clipPath id="u4"><path d="M2470,817.3 L2702,769.7 L2706,782.4 L2712.7,796 L2729,814.9 L2742.5,833.8 L2750.6,855.5 L2751,877 L2746.6,888 L2734.4,893.3 L2718,896 L2702,898.8 L2470,950.6 Z"/></clipPath><path d="M2470,817.3 L2702,769.7 L2706,782.4 L2712.7,796 L2729,814.9 L2742.5,833.8 L2750.6,855.5 L2751,877 L2746.6,888 L2734.4,893.3 L2718,896 L2702,898.8 L2470,950.6 Z" fill="url(#u3)"/><g clip-path="url(#u4)"><path d="M2411.2,829.4 L2818.8,745.7 M2411.2,830.8 L2818.8,747.1 M2411.2,832.3 L2818.8,748.6 M2411.2,834.1 L2818.8,750.2 M2411.2,836.0 L2818.8,752.0 M2411.2,838.1 L2818.8,754.0 M2411.2,840.3 L2818.8,756.1 M2411.2,842.7 L2818.8,758.4 M2411.2,845.2 L2818.8,760.8 M2411.3,847.9 L2818.7,763.3 M2411.3,850.8 L2818.7,766.0 M2411.3,853.8 L2818.7,768.8 M2411.3,856.9 L2818.7,771.8 M2411.3,860.1 L2818.7,774.8 M2411.3,863.4 L2818.7,777.9 M2411.3,866.8 L2818.7,781.2 M2411.3,870.3 L2818.7,784.5 M2411.3,873.9 L2818.7,787.9 M2411.3,877.6 L2818.7,791.4 M2411.3,881.3 L2818.7,794.9 M2411.3,885.1 L2818.7,798.4 M2411.3,888.9 L2818.7,802.0 M2411.3,892.7 L2818.7,805.7 M2411.3,896.5 L2818.7,809.3 M2411.3,900.3 L2818.7,812.9 M2411.3,904.2 L2818.7,816.5 M2411.3,908.0 L2818.7,820.1 M2411.4,911.7 L2818.6,823.7 M2411.4,915.5 L2818.6,827.2 M2411.4,919.1 L2818.6,830.7 M2411.4,922.7 L2818.6,834.1 M2411.4,926.2 L2818.6,837.4 M2411.4,929.6 L2818.6,840.6 M2411.4,933.0 L2818.6,843.8 M2411.4,936.2 L2818.6,846.8 M2411.4,939.3 L2818.6,849.8 M2411.4,942.2 L2818.6,852.6 M2411.4,945.1 L2818.6,855.2 M2411.4,947.8 L2818.6,857.8 M2411.4,950.3 L2818.6,860.2 M2411.4,952.7 L2818.6,862.5 M2411.4,955.0 L2818.6,864.6 M2411.4,957.0 L2818.6,866.6 M2411.4,959.0 L2818.6,868.4 M2411.4,960.7 L2818.6,870.0 M2411.4,962.3 L2818.6,871.5 M2411.4,963.7 L2818.6,872.8" stroke="#2b2b2b" stroke-width="1.0" fill="none" opacity="1.0" shape-rendering="crispEdges"/></g><path d="M2470,817.3 L2702,769.7 L2706,782.4 L2712.7,796 L2729,814.9 L2742.5,833.8 L2750.6,855.5 L2751,877 L2746.6,888 L2734.4,893.3 L2718,896 L2702,898.8 L2470,950.6 Z" fill="none" stroke="#2b2b2b" stroke-width="1.3"/><clipPath id="s8clip"><path d="M2470,817.3 L2702,769.7 L2706,782.4 L2712.7,796 L2729,814.9 L2742.5,833.8 L2750.6,855.5 L2751,877 L2746.6,888 L2734.4,893.3 L2718,896 L2702,898.8 L2470,950.6 Z"/></clipPath><g stroke="#2b2b2b" fill="none" opacity="0.9" clip-path="url(#s8clip)"><path d="M2545.6,861.0 L2682.2,832.0" stroke-width="1.5" stroke-dasharray="18 14 26 22 3 22 3 14"/><path d="M2584.2,852.4 L2691.9,829.6" stroke-width="1.4" stroke-dasharray="35 22 12 14 26 6 5 30"/><path d="M2544.2,919.6 L2659.2,895.2" stroke-width="2.0" stroke-dasharray="35 4 5 22 3 9 35 4"/><path d="M2550.5,862.6 L2736.6,823.1" stroke-width="1.6" stroke-dasharray="12 30 35 14 12 30 35 22"/><path d="M2586.3,911.5 L2667.5,894.3" stroke-width="2.1" stroke-dasharray="5 14 5 9 26 14 35 30"/><path d="M2573.5,870.6 L2705.3,842.6" stroke-width="2.1" stroke-dasharray="18 22 12 22 5 9 26 4"/><path d="M2569.4,919.8 L2674.9,897.4" stroke-width="1.4" stroke-dasharray="35 9 18 22 18 4 26 30"/><path d="M2558.3,908.6 L2684.1,881.9" stroke-width="1.6" stroke-dasharray="3 14 35 30 12 4 8 4"/><path d="M2522.6,858.4 L2719.7,816.6" stroke-width="1.8" stroke-dasharray="35 4 3 22 18 4 12 30"/><path d="M2583.4,879.5 L2678.7,859.3" stroke-width="1.2" stroke-dasharray="5 4 8 4 3 4 18 22"/><path d="M2533.2,860.1 L2705.0,823.7" stroke-width="1.6" stroke-dasharray="5 30 3 9 8 9 5 14"/><path d="M2542.9,915.1 L2741.7,872.9" stroke-width="1.8" stroke-dasharray="26 22 3 22 35 22 8 14"/><path d="M2587.4,892.6 L2697.0,869.3" stroke-width="2.2" stroke-dasharray="8 22 8 22 8 4 35 14"/><path d="M2532.5,870.3 L2705.0,833.7" stroke-width="2.1" stroke-dasharray="5 4 26 30 8 14 8 30"/><path d="M2529.2,895.9 L2700.3,859.6" stroke-width="1.5" stroke-dasharray="18 4 26 4 8 9 26 14"/><path d="M2520.4,897.1 L2670.3,865.3" stroke-width="1.3" stroke-dasharray="35 9 35 22 8 9 35 14"/><path d="M2592.1,899.9 L2722.8,872.1" stroke-width="1.4" stroke-dasharray="5 9 18 6 26 9 5 9"/><path d="M2562.2,874.2 L2659.3,853.6" stroke-width="1.9" stroke-dasharray="8 9 26 6 12 6 3 9"/><path d="M2547.3,858.9 L2672.1,832.4" stroke-width="1.4" stroke-dasharray="35 4 3 22 5 9 35 22"/><path d="M2568.8,859.5 L2709.5,829.6" stroke-width="2.0" stroke-dasharray="35 22 8 22 5 14 8 22"/><path d="M2529.2,867.3 L2687.3,833.7" stroke-width="1.7" stroke-dasharray="12 22 12 4 12 6 5 4"/><path d="M2562.5,907.8 L2706.1,877.3" stroke-width="1.9" stroke-dasharray="18 30 5 4 26 14 35 30"/></g><path d="M2218.0,794.9 V1030.5 A145.5,93.5 0 0 0 2509.0,1030.5 V794.9 Z" fill="#858585"/><path d="M2218.0,794.9 V1016.5 A145.5,93.5 0 0 0 2509.0,1016.5 V794.9 Z" fill="#0000f4"/><path d="M2218.0,794.9 V966.5 A145.5,93.5 0 0 0 2509.0,966.5 V794.9 Z" fill="#0084c8"/><clipPath id="u7"><path d="M2218.0,794.9 V1030.5 A145.5,93.5 0 0 0 2509.0,1030.5 V794.9 Z"/></clipPath><g clip-path="url(#u7)"><path d="M2508.9,797.7 V1033.3 M2508.9,797.7 L2506.7,983.2 M2506.7,983.2 L2508.9,1019.3 M2506.7,1033.2 L2508.9,1033.3 M2506.7,811.6 V1047.2 M2506.7,811.6 L2501.2,996.7 M2501.2,996.7 L2506.7,1033.2 M2501.2,1046.7 L2506.7,1047.2 M2501.2,825.1 V1060.7 M2501.2,825.1 L2492.6,1009.6 M2492.6,1009.6 L2501.2,1046.7 M2492.6,1059.6 L2501.2,1060.7 M2492.6,838.0 V1073.6 M2492.6,838.0 L2481.2,1021.5 M2481.2,1021.5 L2492.6,1059.6 M2481.2,1071.5 L2492.6,1073.6 M2481.2,849.9 V1085.5 M2481.2,849.9 L2467.1,1032.1 M2467.1,1032.1 L2481.2,1071.5 M2467.1,1082.1 L2481.2,1085.5 M2467.1,860.5 V1096.1 M2467.1,860.5 L2450.8,1041.3 M2450.8,1041.3 L2467.1,1082.1 M2450.8,1091.3 L2467.1,1096.1 M2450.8,869.7 V1105.3 M2450.8,869.7 L2432.4,1048.8 M2432.4,1048.8 L2450.8,1091.3 M2432.4,1098.8 L2450.8,1105.3 M2432.4,877.2 V1112.8 M2432.4,877.2 L2412.6,1054.5 M2412.6,1054.5 L2432.4,1098.8 M2412.6,1104.5 L2432.4,1112.8 M2412.6,882.9 V1118.5 M2412.6,882.9 L2391.6,1058.2 M2391.6,1058.2 L2412.6,1104.5 M2391.6,1108.2 L2412.6,1118.5 M2391.6,886.6 V1122.2 M2391.6,886.6 L2370.0,1059.9 M2370.0,1059.9 L2391.6,1108.2 M2370.0,1109.9 L2391.6,1122.2 M2370.0,888.3 V1123.9 M2370.0,888.3 L2348.3,1059.5 M2348.3,1059.5 L2370.0,1109.9 M2348.3,1109.5 L2370.0,1123.9 M2348.3,887.9 V1123.5 M2348.3,887.9 L2326.9,1057.0 M2326.9,1057.0 L2348.3,1109.5 M2326.9,1107.0 L2348.3,1123.5 M2326.9,885.4 V1121.0 M2326.9,885.4 L2306.3,1052.5 M2306.3,1052.5 L2326.9,1107.0 M2306.3,1102.5 L2326.9,1121.0 M2306.3,880.9 V1116.5 M2306.3,880.9 L2287.0,1046.0 M2287.0,1046.0 L2306.3,1102.5 M2287.0,1096.0 L2306.3,1116.5 M2287.0,874.4 V1110.0 M2287.0,874.4 L2269.4,1037.8 M2269.4,1037.8 L2287.0,1096.0 M2269.4,1087.8 L2287.0,1110.0 M2269.4,866.2 V1101.8 M2269.4,866.2 L2253.9,1028.0 M2253.9,1028.0 L2269.4,1087.8 M2253.9,1078.0 L2269.4,1101.8 M2253.9,856.4 V1092.0 M2253.9,856.4 L2240.9,1016.8 M2240.9,1016.8 L2253.9,1078.0 M2240.9,1066.8 L2253.9,1092.0 M2240.9,845.2 V1080.8 M2240.9,845.2 L2230.6,1004.5 M2230.6,1004.5 L2240.9,1066.8 M2230.6,1054.5 L2240.9,1080.8 M2230.6,832.9 V1068.5 M2230.6,832.9 L2223.2,991.4 M2223.2,991.4 L2230.6,1054.5 M2223.2,1041.4 L2230.6,1068.5 M2223.2,819.8 V1055.4 M2223.2,819.8 L2219.0,977.7 M2219.0,977.7 L2223.2,1041.4 M2219.0,1027.7 L2223.2,1055.4 M2219.0,806.1 V1041.7" stroke="#2b2b2b" stroke-width="1" fill="none" shape-rendering="crispEdges"/><path d="M2218.0,966.5 A145.5,93.5 0 0 0 2509.0,966.5" stroke="#2b2b2b" stroke-width="1.3" fill="none"/><path d="M2218.0,1016.5 A145.5,93.5 0 0 0 2509.0,1016.5" stroke="#2b2b2b" stroke-width="1.3" fill="none"/></g><path d="M2218.0,794.9 V1030.5 A145.5,93.5 0 0 0 2509.0,1030.5 V794.9" stroke="#2b2b2b" stroke-width="1.6" fill="none"/><ellipse cx="2363.5" cy="794.9" rx="145.5" ry="93.5" fill="#00a0f0" stroke="#2b2b2b" stroke-width="1.6"/><path d="M2508.9,797.7 L2498.7,797.5 M2508.9,797.7 L2496.6,810.5 M2506.7,811.6 L2496.6,810.5 M2506.7,811.6 L2491.5,823.1 M2501.2,825.1 L2491.5,823.1 M2501.2,825.1 L2483.6,835.1 M2492.6,838.0 L2483.6,835.1 M2492.6,838.0 L2473.0,846.2 M2481.2,849.9 L2473.0,846.2 M2481.2,849.9 L2459.9,856.1 M2467.1,860.5 L2459.9,856.1 M2467.1,860.5 L2444.6,864.7 M2450.8,869.7 L2444.6,864.7 M2450.8,869.7 L2427.6,871.7 M2432.4,877.2 L2427.6,871.7 M2432.4,877.2 L2409.1,877.0 M2412.6,882.9 L2409.1,877.0 M2412.6,882.9 L2389.6,880.5 M2391.6,886.6 L2389.6,880.5 M2391.6,886.6 L2369.6,882.0 M2370.0,888.3 L2369.6,882.0 M2370.0,888.3 L2349.3,881.6 M2348.3,887.9 L2349.3,881.6 M2348.3,887.9 L2329.4,879.3 M2326.9,885.4 L2329.4,879.3 M2326.9,885.4 L2310.3,875.1 M2306.3,880.9 L2310.3,875.1 M2306.3,880.9 L2292.4,869.1 M2287.0,874.4 L2292.4,869.1 M2287.0,874.4 L2276.0,861.4 M2269.4,866.2 L2276.0,861.4 M2269.4,866.2 L2261.6,852.3 M2253.9,856.4 L2261.6,852.3 M2253.9,856.4 L2249.5,841.8 M2240.9,845.2 L2249.5,841.8 M2240.9,845.2 L2239.9,830.4 M2230.6,832.9 L2239.9,830.4 M2230.6,832.9 L2233.1,818.1 M2223.2,819.8 L2233.1,818.1 M2223.2,819.8 L2229.2,805.3 M2219.0,806.1 L2229.2,805.3 M2219.0,806.1 L2228.3,792.3 M2218.1,792.1 L2228.3,792.3 M2218.1,792.1 L2230.4,779.3 M2220.3,778.2 L2230.4,779.3 M2220.3,778.2 L2235.5,766.7 M2225.8,764.7 L2235.5,766.7 M2225.8,764.7 L2243.4,754.7 M2234.4,751.8 L2243.4,754.7 M2234.4,751.8 L2254.0,743.6 M2245.8,739.9 L2254.0,743.6 M2245.8,739.9 L2267.1,733.7 M2259.9,729.3 L2267.1,733.7 M2259.9,729.3 L2282.4,725.1 M2276.2,720.1 L2282.4,725.1 M2276.2,720.1 L2299.4,718.1 M2294.6,712.6 L2299.4,718.1 M2294.6,712.6 L2317.9,712.8 M2314.4,706.9 L2317.9,712.8 M2314.4,706.9 L2337.4,709.3 M2335.4,703.2 L2337.4,709.3 M2335.4,703.2 L2357.4,707.8 M2357.0,701.5 L2357.4,707.8 M2357.0,701.5 L2377.7,708.2 M2378.7,701.9 L2377.7,708.2 M2378.7,701.9 L2397.6,710.5 M2400.1,704.4 L2397.6,710.5 M2400.1,704.4 L2416.7,714.7 M2420.7,708.9 L2416.7,714.7 M2420.7,708.9 L2434.6,720.7 M2440.0,715.4 L2434.6,720.7 M2440.0,715.4 L2451.0,728.4 M2457.6,723.6 L2451.0,728.4 M2457.6,723.6 L2465.4,737.5 M2473.1,733.4 L2465.4,737.5 M2473.1,733.4 L2477.5,748.0 M2486.1,744.6 L2477.5,748.0 M2486.1,744.6 L2487.1,759.4 M2496.4,756.9 L2487.1,759.4 M2496.4,756.9 L2493.9,771.7 M2503.8,770.0 L2493.9,771.7 M2503.8,770.0 L2497.8,784.5 M2508.0,783.7 L2497.8,784.5 M2508.0,783.7 L2498.7,797.5" stroke="#2b2b2b" stroke-width="0.8" fill="none"/><clipPath id="u8"><ellipse cx="2363.5" cy="794.9" rx="135.3" ry="87.2"/></clipPath><ellipse cx="2363.5" cy="794.9" rx="135.3" ry="87.2" fill="#0084c8"/><g clip-path="url(#u8)"><path d="M2498.7,797.5 V1043.2 M2496.6,810.5 L2498.7,1061.9 M2228.3,792.3 V1038.0 M2230.4,779.3 L2228.3,1056.7 M2230.4,779.3 V1025.0 M2235.5,766.7 L2230.4,1043.7 M2235.5,766.7 V1012.4 M2243.4,754.7 L2235.5,1031.1 M2243.4,754.7 V1000.4 M2254.0,743.6 L2243.4,1019.1 M2254.0,743.6 V989.3 M2267.1,733.7 L2254.0,1008.0 M2267.1,733.7 V979.4 M2282.4,725.1 L2267.1,998.1 M2282.4,725.1 V970.8 M2299.4,718.1 L2282.4,989.5 M2299.4,718.1 V963.8 M2317.9,712.8 L2299.4,982.5 M2317.9,712.8 V958.5 M2337.4,709.3 L2317.9,977.2 M2337.4,709.3 V955.0 M2357.4,707.8 L2337.4,973.7 M2357.4,707.8 V953.5 M2377.7,708.2 L2357.4,972.2 M2377.7,708.2 V953.9 M2397.6,710.5 L2377.7,972.6 M2397.6,710.5 V956.2 M2416.7,714.7 L2397.6,974.9 M2416.7,714.7 V960.4 M2434.6,720.7 L2416.7,979.1 M2434.6,720.7 V966.4 M2451.0,728.4 L2434.6,985.1 M2451.0,728.4 V974.1 M2465.4,737.5 L2451.0,992.8 M2465.4,737.5 V983.2 M2477.5,748.0 L2465.4,1001.9 M2477.5,748.0 V993.7 M2487.1,759.4 L2477.5,1012.4 M2487.1,759.4 V1005.1 M2493.9,771.7 L2487.1,1023.8 M2493.9,771.7 V1017.4 M2497.8,784.5 L2493.9,1036.1 M2497.8,784.5 V1030.2 M2498.7,797.5 L2497.8,1048.9" stroke="#2b2b2b" stroke-width="1" fill="none" shape-rendering="crispEdges"/><clipPath id="u5"><path d="M2276,868 C2290,850 2310,844 2328,845 C2350,846 2372,856 2396,871 L2412,880 L2412,905 L2270,905 Z"/></clipPath><path d="M2276,868 C2290,850 2310,844 2328,845 C2350,846 2372,856 2396,871 L2412,880 L2412,905 L2270,905 Z" fill="#00a0f0" stroke="#2b2b2b" stroke-width="1.6"/><g clip-path="url(#u5)"><path d="M2200.8,905.0 L2260.8,835.0 M2209.0,905.0 L2269.0,835.0 M2217.2,905.0 L2277.2,835.0 M2225.4,905.0 L2285.4,835.0 M2233.6,905.0 L2293.6,835.0 M2241.8,905.0 L2301.8,835.0 M2250.0,905.0 L2310.0,835.0 M2258.2,905.0 L2318.2,835.0 M2266.4,905.0 L2326.4,835.0 M2274.6,905.0 L2334.6,835.0 M2282.8,905.0 L2342.8,835.0 M2291.0,905.0 L2351.0,835.0 M2299.2,905.0 L2359.2,835.0 M2307.4,905.0 L2367.4,835.0 M2315.6,905.0 L2375.6,835.0 M2323.8,905.0 L2383.8,835.0 M2332.0,905.0 L2392.0,835.0 M2340.2,905.0 L2400.2,835.0 M2348.4,905.0 L2408.4,835.0 M2356.6,905.0 L2416.6,835.0 M2364.8,905.0 L2424.8,835.0 M2373.0,905.0 L2433.0,835.0 M2381.2,905.0 L2441.2,835.0 M2389.4,905.0 L2449.4,835.0 M2397.6,905.0 L2457.6,835.0 M2405.8,905.0 L2465.8,835.0 M2414.0,905.0 L2474.0,835.0 M2422.2,905.0 L2482.2,835.0 M2430.4,905.0 L2490.4,835.0 M2438.6,905.0 L2498.6,835.0 M2446.8,905.0 L2506.8,835.0 M2455.0,905.0 L2515.0,835.0" stroke="#2b2b2b" stroke-width="1.2" fill="none"/></g><clipPath id="u6"><path d="M2386.2,837 L2520,809 L2520,900 L2408,881 Z"/></clipPath><path d="M2386.2,837 L2520,809 L2520,900 L2408,881 Z" fill="#0090dc" stroke="#2b2b2b" stroke-width="1.4"/><g clip-path="url(#u6)"><path d="M2384,836.0 L2520,807.5 M2384,839.2 L2520,810.7 M2384,842.4 L2520,813.9 M2384,845.6 L2520,817.1 M2384,848.8 L2520,820.3 M2384,852.0 L2520,823.5 M2384,855.2 L2520,826.7 M2384,858.4 L2520,829.9 M2384,861.6 L2520,833.1 M2384,864.8 L2520,836.3 M2384,868.0 L2520,839.5 M2384,871.2 L2520,842.7 M2384,874.4 L2520,845.9 M2384,877.6 L2520,849.1 M2384,880.8 L2520,852.3 M2384,884.0 L2520,855.5 M2384,887.2 L2520,858.7 M2384,890.4 L2520,861.9 M2384,893.6 L2520,865.1 M2384,896.8 L2520,868.3 M2384,900.0 L2520,871.5 M2384,903.2 L2520,874.7 M2384,906.4 L2520,877.9 M2384,909.6 L2520,881.1 M2384,912.8 L2520,884.3 M2384,916.0 L2520,887.5" stroke="#2b2b2b" stroke-width="1" fill="none" shape-rendering="crispEdges"/></g><path d="M2386.2,837 C2381,845 2379,855 2379.8,860 C2388,868 2398,876 2406.5,880 C2404,862 2396,845 2386.2,837 Z" fill="#0084c8" stroke="#2b2b2b" stroke-width="1.8"/></g><ellipse cx="2363.5" cy="794.9" rx="135.3" ry="87.2" fill="none" stroke="#2b2b2b" stroke-width="1.6"/><linearGradient id="u9" gradientUnits="userSpaceOnUse" x1="2714.0" y1="1013.6" x2="2695.4" y2="1076.0"><stop offset="0" stop-color="#0a8cd8"/><stop offset="0.2" stop-color="#009cec"/><stop offset="0.5" stop-color="#0090dc"/><stop offset="1" stop-color="#0074b8"/></linearGradient><clipPath id="u10"><path d="M2493.8,947.9 L2950,1084.1 L2950,1152.4 L2473,1009.2 L2465.4,1003.2 L2461,986.7 L2468.4,968.8 L2478.9,956.8 Z"/></clipPath><path d="M2493.8,947.9 L2950,1084.1 L2950,1152.4 L2473,1009.2 L2465.4,1003.2 L2461,986.7 L2468.4,968.8 L2478.9,956.8 Z" fill="url(#u9)"/><g clip-path="url(#u10)"><path d="M2420.5,926.0 L3007.5,1101.3 M2420.1,927.2 L3007.5,1102.5 M2419.7,928.5 L3007.5,1104.0 M2419.2,930.1 L3007.5,1105.8 M2418.6,931.9 L3007.5,1107.8 M2417.9,933.9 L3007.5,1110.1 M2417.2,936.1 L3007.5,1112.5 M2416.5,938.5 L3007.5,1115.1 M2415.6,941.0 L3007.5,1118.0 M2414.8,943.7 L3007.5,1120.9 M2413.9,946.5 L3007.5,1124.0 M2412.9,949.3 L3007.5,1127.2 M2412.0,952.3 L3007.5,1130.5 M2411.0,955.2 L3007.5,1133.8 M2410.0,958.2 L3007.5,1137.1 M2409.1,961.2 L3007.5,1140.4 M2408.1,964.1 L3007.5,1143.7 M2407.2,967.0 L3007.5,1146.9 M2406.3,969.8 L3007.5,1150.0 M2405.4,972.5 L3007.5,1153.0 M2404.6,975.0 L3007.5,1155.8 M2403.8,977.4 L3007.5,1158.4 M2403.1,979.6 L3007.5,1160.9 M2402.4,981.6 L3007.5,1163.1 M2401.9,983.4 L3007.5,1165.1 M2401.3,984.9 L3007.5,1166.9 M2400.9,986.3 L3007.5,1168.4 M2400.5,987.4 L3007.5,1169.7" stroke="#2b2b2b" stroke-width="1.0" fill="none" opacity="1.0" shape-rendering="crispEdges"/></g><path d="M2493.8,947.9 L2950,1084.1 L2950,1152.4 L2473,1009.2 L2465.4,1003.2 L2461,986.7 L2468.4,968.8 L2478.9,956.8 Z" fill="none" stroke="#2b2b2b" stroke-width="1.3"/><clipPath id="s4clip"><path d="M2493.8,947.9 L2950,1084.1 L2950,1152.4 L2473,1009.2 L2465.4,1003.2 L2461,986.7 L2468.4,968.8 L2478.9,956.8 Z"/></clipPath><g stroke="#2b2b2b" fill="none" opacity="0.9" clip-path="url(#s4clip)"><path d="M2568.2,1005.8 L2917.2,1109.5" stroke-width="1.6" stroke-dasharray="12 14 18 22 5 6 35 22"/><path d="M2506.9,996.1 L2828.7,1091.7" stroke-width="2.0" stroke-dasharray="5 4 18 30 26 4 18 14"/><path d="M2574.1,1018.1 L2776.0,1078.1" stroke-width="1.2" stroke-dasharray="3 22 3 4 3 6 5 22"/><path d="M2549.2,1000.8 L2902.2,1105.7" stroke-width="1.6" stroke-dasharray="18 6 26 9 12 4 26 4"/><path d="M2639.8,1018.0 L2932.5,1105.0" stroke-width="1.2" stroke-dasharray="35 4 26 9 8 6 18 9"/><path d="M2495.3,990.0 L2768.3,1071.1" stroke-width="1.4" stroke-dasharray="8 14 3 4 35 30 3 6"/><path d="M2547.5,1023.6 L2920.8,1134.5" stroke-width="1.4" stroke-dasharray="12 14 3 22 26 6 35 30"/><path d="M2537.5,977.7 L2929.5,1094.2" stroke-width="1.6" stroke-dasharray="35 4 5 6 26 4 3 4"/><path d="M2587.0,1013.2 L2783.9,1071.7" stroke-width="1.5" stroke-dasharray="18 6 26 6 12 30 12 4"/><path d="M2472.2,1005.4 L2898.7,1132.1" stroke-width="1.7" stroke-dasharray="35 22 8 4 5 6 12 22"/><path d="M2641.0,1009.1 L2793.9,1054.5" stroke-width="1.3" stroke-dasharray="8 4 35 22 8 9 12 4"/><path d="M2583.8,997.8 L2756.7,1049.1" stroke-width="1.3" stroke-dasharray="8 9 18 14 5 22 12 22"/><path d="M2579.8,1005.8 L2807.4,1073.5" stroke-width="2.0" stroke-dasharray="5 22 5 30 5 6 26 30"/><path d="M2633.4,1011.9 L2913.2,1095.0" stroke-width="2.0" stroke-dasharray="18 4 12 4 3 4 3 22"/><path d="M2594.1,1002.4 L2799.8,1063.5" stroke-width="1.3" stroke-dasharray="35 22 12 9 18 6 26 4"/><path d="M2582.6,1011.5 L2861.1,1094.3" stroke-width="1.5" stroke-dasharray="3 9 5 6 26 4 3 9"/></g><linearGradient id="u11" gradientUnits="userSpaceOnUse" x1="2130.5" y1="1054.7" x2="2259.1" y2="1164.6"><stop offset="0" stop-color="#0a98e6"/><stop offset="0.1" stop-color="#00a0f0"/><stop offset="0.55" stop-color="#009cea"/><stop offset="0.8" stop-color="#008edb"/><stop offset="1" stop-color="#0080c8"/></linearGradient><clipPath id="u12"><path d="M2261,902 L2280,900 L2300,904 L2330,915 L2362,930 L2385,947 L2394,958 L2393,980 L2391,1000 L2070,1396 L2000,1207.3 Z"/></clipPath><path d="M2261,902 L2280,900 L2300,904 L2330,915 L2362,930 L2385,947 L2394,958 L2393,980 L2391,1000 L2070,1396 L2000,1207.3 Z" fill="url(#u11)"/><g clip-path="url(#u12)"><path d="M2300.0,856.4 L1961.0,1252.9 M2301.9,857.8 L1962.1,1255.7 M2304.1,859.5 L1963.3,1259.0 M2306.7,861.4 L1964.7,1262.8 M2309.5,863.6 L1966.3,1267.0 M2312.7,865.9 L1968.1,1271.7 M2316.1,868.5 L1970.0,1276.7 M2319.8,871.3 L1972.0,1282.2 M2323.8,874.3 L1974.2,1288.1 M2328.0,877.5 L1976.6,1294.2 M2332.4,880.8 L1979.0,1300.7 M2337.0,884.2 L1981.5,1307.5 M2341.7,887.8 L1984.2,1314.5 M2346.6,891.5 L1986.9,1321.7 M2351.6,895.2 L1989.6,1329.1 M2356.6,899.0 L1992.4,1336.5 M2361.8,902.9 L1995.3,1344.0 M2366.9,906.8 L1998.1,1351.6 M2372.0,910.6 L2000.9,1359.1 M2377.1,914.4 L2003.7,1366.6 M2382.1,918.2 L2006.5,1373.9 M2386.9,921.9 L2009.2,1381.1 M2391.7,925.5 L2011.8,1388.1 M2396.3,928.9 L2014.3,1394.9 M2400.7,932.2 L2016.8,1401.4 M2404.9,935.4 L2019.1,1407.5 M2408.9,938.4 L2021.3,1413.4 M2412.6,941.2 L2023.3,1418.8 M2416.0,943.8 L2025.2,1423.9 M2419.2,946.2 L2026.9,1428.5 M2422.1,948.3 L2028.5,1432.7 M2424.6,950.3 L2029.9,1436.5 M2426.9,951.9 L2031.2,1439.8 M2428.8,953.4 L2032.2,1442.6" stroke="#2b2b2b" stroke-width="0.85" fill="none" opacity="1.0"/></g><path d="M2261,902 L2280,900 L2300,904 L2330,915 L2362,930 L2385,947 L2394,958 L2393,980 L2391,1000 L2070,1396 L2000,1207.3 Z" fill="none" stroke="#2b2b2b" stroke-width="1.3"/><path d="M2931.4,990.2 V1227.7 A101.0,64.8 0 0 0 3133.4,1227.7 V990.2 Z" fill="#858585"/><path d="M2931.4,990.2 V1213.7 A101.0,64.8 0 0 0 3133.4,1213.7 V990.2 Z" fill="#0000f4"/><path d="M2931.4,990.2 V1159.8 A101.0,64.8 0 0 0 3133.4,1159.8 V990.2 Z" fill="#0084c8"/><clipPath id="u13"><path d="M2931.4,990.2 V1227.7 A101.0,64.8 0 0 0 3133.4,1227.7 V990.2 Z"/></clipPath><g clip-path="url(#u13)"><path d="M3133.4,991.5 V1229.0 M3133.4,991.5 L3132.0,1170.7 M3132.0,1170.7 L3133.4,1215.0 M3132.0,1224.6 L3133.4,1229.0 M3132.0,1001.1 V1238.6 M3132.0,1001.1 L3128.3,1180.1 M3128.3,1180.1 L3132.0,1224.6 M3128.3,1234.0 L3132.0,1238.6 M3128.3,1010.5 V1248.0 M3128.3,1010.5 L3122.5,1189.1 M3122.5,1189.1 L3128.3,1234.0 M3122.5,1243.0 L3128.3,1248.0 M3122.5,1019.5 V1257.0 M3122.5,1019.5 L3114.7,1197.4 M3114.7,1197.4 L3122.5,1243.0 M3114.7,1251.3 L3122.5,1257.0 M3114.7,1027.8 V1265.3 M3114.7,1027.8 L3105.0,1204.8 M3105.0,1204.8 L3114.7,1251.3 M3105.0,1258.7 L3114.7,1265.3 M3105.0,1035.2 V1272.7 M3105.0,1035.2 L3093.8,1211.3 M3093.8,1211.3 L3105.0,1258.7 M3093.8,1265.2 L3105.0,1272.7 M3093.8,1041.7 V1279.2 M3093.8,1041.7 L3081.1,1216.6 M3081.1,1216.6 L3093.8,1265.2 M3081.1,1270.5 L3093.8,1279.2 M3081.1,1047.0 V1284.5 M3081.1,1047.0 L3067.4,1220.6 M3067.4,1220.6 L3081.1,1270.5 M3067.4,1274.5 L3081.1,1284.5 M3067.4,1051.0 V1288.5 M3067.4,1051.0 L3052.9,1223.3 M3052.9,1223.3 L3067.4,1274.5 M3052.9,1277.2 L3067.4,1288.5 M3052.9,1053.7 V1291.2 M3052.9,1053.7 L3037.9,1224.5 M3037.9,1224.5 L3052.9,1277.2 M3037.9,1278.4 L3052.9,1291.2 M3037.9,1054.9 V1292.4 M3037.9,1054.9 L3022.8,1224.3 M3022.8,1224.3 L3037.9,1278.4 M3022.8,1278.2 L3037.9,1292.4 M3022.8,1054.7 V1292.2 M3022.8,1054.7 L3008.0,1222.7 M3008.0,1222.7 L3022.8,1278.2 M3008.0,1276.6 L3022.8,1292.2 M3008.0,1053.1 V1290.6 M3008.0,1053.1 L2993.6,1219.6 M2993.6,1219.6 L3008.0,1276.6 M2993.6,1273.5 L3008.0,1290.6 M2993.6,1050.0 V1287.5 M2993.6,1050.0 L2980.2,1215.3 M2980.2,1215.3 L2993.6,1273.5 M2980.2,1269.2 L2993.6,1287.5 M2980.2,1045.7 V1283.2 M2980.2,1045.7 L2967.9,1209.6 M2967.9,1209.6 L2980.2,1269.2 M2967.9,1263.5 L2980.2,1283.2 M2967.9,1040.0 V1277.5 M2967.9,1040.0 L2957.0,1202.9 M2957.0,1202.9 L2967.9,1263.5 M2957.0,1256.8 L2967.9,1277.5 M2957.0,1033.3 V1270.8 M2957.0,1033.3 L2947.8,1195.2 M2947.8,1195.2 L2957.0,1256.8 M2947.8,1249.1 L2957.0,1270.8 M2947.8,1025.6 V1263.1 M2947.8,1025.6 L2940.5,1186.7 M2940.5,1186.7 L2947.8,1249.1 M2940.5,1240.6 L2947.8,1263.1 M2940.5,1017.1 V1254.6 M2940.5,1017.1 L2935.3,1177.7 M2935.3,1177.7 L2940.5,1240.6 M2935.3,1231.6 L2940.5,1254.6 M2935.3,1008.1 V1245.6 M2935.3,1008.1 L2932.2,1168.2 M2932.2,1168.2 L2935.3,1231.6 M2932.2,1222.1 L2935.3,1245.6 M2932.2,998.6 V1236.1 M2932.2,998.6 L2931.4,1158.5 M2931.4,1158.5 L2932.2,1222.1 M2931.4,1212.4 L2932.2,1236.1 M2931.4,988.9 V1226.4" stroke="#2b2b2b" stroke-width="1" fill="none" shape-rendering="crispEdges"/><path d="M2931.4,1159.8 A101.0,64.8 0 0 0 3133.4,1159.8" stroke="#2b2b2b" stroke-width="1.3" fill="none"/><path d="M2931.4,1213.7 A101.0,64.8 0 0 0 3133.4,1213.7" stroke="#2b2b2b" stroke-width="1.3" fill="none"/></g><path d="M2931.4,990.2 V1227.7 A101.0,64.8 0 0 0 3133.4,1227.7 V990.2" stroke="#2b2b2b" stroke-width="1.6" fill="none"/><ellipse cx="3032.4" cy="990.2" rx="101.0" ry="64.8" fill="#00a0f0" stroke="#2b2b2b" stroke-width="1.6"/><path d="M3133.4,991.5 L3123.2,991.4 M3133.4,991.5 L3121.9,1000.1 M3132.0,1001.1 L3121.9,1000.1 M3132.0,1001.1 L3118.6,1008.6 M3128.3,1010.5 L3118.6,1008.6 M3128.3,1010.5 L3113.4,1016.6 M3122.5,1019.5 L3113.4,1016.6 M3122.5,1019.5 L3106.4,1024.1 M3114.7,1027.8 L3106.4,1024.1 M3114.7,1027.8 L3097.7,1030.8 M3105.0,1035.2 L3097.7,1030.8 M3105.0,1035.2 L3087.6,1036.7 M3093.8,1041.7 L3087.6,1036.7 M3093.8,1041.7 L3076.2,1041.4 M3081.1,1047.0 L3076.2,1041.4 M3081.1,1047.0 L3063.9,1045.1 M3067.4,1051.0 L3063.9,1045.1 M3067.4,1051.0 L3050.8,1047.5 M3052.9,1053.7 L3050.8,1047.5 M3052.9,1053.7 L3037.4,1048.6 M3037.9,1054.9 L3037.4,1048.6 M3037.9,1054.9 L3023.8,1048.4 M3022.8,1054.7 L3023.8,1048.4 M3022.8,1054.7 L3010.4,1047.0 M3008.0,1053.1 L3010.4,1047.0 M3008.0,1053.1 L2997.5,1044.2 M2993.6,1050.0 L2997.5,1044.2 M2993.6,1050.0 L2985.4,1040.3 M2980.2,1045.7 L2985.4,1040.3 M2980.2,1045.7 L2974.4,1035.2 M2967.9,1040.0 L2974.4,1035.2 M2967.9,1040.0 L2964.6,1029.1 M2957.0,1033.3 L2964.6,1029.1 M2957.0,1033.3 L2956.4,1022.2 M2947.8,1025.6 L2956.4,1022.2 M2947.8,1025.6 L2949.8,1014.5 M2940.5,1017.1 L2949.8,1014.5 M2940.5,1017.1 L2945.1,1006.3 M2935.3,1008.1 L2945.1,1006.3 M2935.3,1008.1 L2942.4,997.8 M2932.2,998.6 L2942.4,997.8 M2932.2,998.6 L2941.6,989.0 M2931.4,988.9 L2941.6,989.0 M2931.4,988.9 L2942.9,980.3 M2932.8,979.3 L2942.9,980.3 M2932.8,979.3 L2946.2,971.8 M2936.5,969.9 L2946.2,971.8 M2936.5,969.9 L2951.4,963.8 M2942.3,960.9 L2951.4,963.8 M2942.3,960.9 L2958.4,956.3 M2950.1,952.6 L2958.4,956.3 M2950.1,952.6 L2967.1,949.6 M2959.8,945.2 L2967.1,949.6 M2959.8,945.2 L2977.2,943.7 M2971.0,938.7 L2977.2,943.7 M2971.0,938.7 L2988.6,939.0 M2983.7,933.4 L2988.6,939.0 M2983.7,933.4 L3000.9,935.3 M2997.4,929.4 L3000.9,935.3 M2997.4,929.4 L3014.0,932.9 M3011.9,926.7 L3014.0,932.9 M3011.9,926.7 L3027.4,931.8 M3026.9,925.5 L3027.4,931.8 M3026.9,925.5 L3041.0,932.0 M3042.0,925.7 L3041.0,932.0 M3042.0,925.7 L3054.4,933.4 M3056.8,927.3 L3054.4,933.4 M3056.8,927.3 L3067.3,936.2 M3071.2,930.4 L3067.3,936.2 M3071.2,930.4 L3079.4,940.1 M3084.6,934.7 L3079.4,940.1 M3084.6,934.7 L3090.4,945.2 M3096.9,940.4 L3090.4,945.2 M3096.9,940.4 L3100.2,951.3 M3107.8,947.1 L3100.2,951.3 M3107.8,947.1 L3108.4,958.2 M3117.0,954.8 L3108.4,958.2 M3117.0,954.8 L3115.0,965.9 M3124.3,963.3 L3115.0,965.9 M3124.3,963.3 L3119.7,974.1 M3129.5,972.3 L3119.7,974.1 M3129.5,972.3 L3122.4,982.6 M3132.6,981.8 L3122.4,982.6 M3132.6,981.8 L3123.2,991.4" stroke="#2b2b2b" stroke-width="0.8" fill="none"/><clipPath id="u14"><ellipse cx="3032.4" cy="990.2" rx="90.8" ry="58.5"/></clipPath><ellipse cx="3032.4" cy="990.2" rx="90.8" ry="58.5" fill="#0084c8"/><g clip-path="url(#u14)"><path d="M3123.2,991.4 V1173.9 M3121.9,1000.1 L3123.2,1186.9 M2941.6,989.0 V1171.6 M2942.9,980.3 L2941.6,1184.6 M2942.9,980.3 V1162.9 M2946.2,971.8 L2942.9,1175.8 M2946.2,971.8 V1154.4 M2951.4,963.8 L2946.2,1167.4 M2951.4,963.8 V1146.3 M2958.4,956.3 L2951.4,1159.3 M2958.4,956.3 V1138.8 M2967.1,949.6 L2958.4,1151.8 M2967.1,949.6 V1132.1 M2977.2,943.7 L2967.1,1145.1 M2977.2,943.7 V1126.3 M2988.6,939.0 L2977.2,1139.3 M2988.6,939.0 V1121.5 M3000.9,935.3 L2988.6,1134.5 M3000.9,935.3 V1117.9 M3014.0,932.9 L3000.9,1130.8 M3014.0,932.9 V1115.5 M3027.4,931.8 L3014.0,1128.4 M3027.4,931.8 V1114.3 M3041.0,932.0 L3027.4,1127.3 M3041.0,932.0 V1114.5 M3054.4,933.4 L3041.0,1127.5 M3054.4,933.4 V1116.0 M3067.3,936.2 L3054.4,1129.0 M3067.3,936.2 V1118.7 M3079.4,940.1 L3067.3,1131.7 M3079.4,940.1 V1122.7 M3090.4,945.2 L3079.4,1135.7 M3090.4,945.2 V1127.8 M3100.2,951.3 L3090.4,1140.7 M3100.2,951.3 V1133.8 M3108.4,958.2 L3100.2,1146.8 M3108.4,958.2 V1140.8 M3115.0,965.9 L3108.4,1153.7 M3115.0,965.9 V1148.4 M3119.7,974.1 L3115.0,1161.4 M3119.7,974.1 V1156.6 M3122.4,982.6 L3119.7,1169.6 M3122.4,982.6 V1165.2 M3123.2,991.4 L3122.4,1178.2" stroke="#2b2b2b" stroke-width="1" fill="none" shape-rendering="crispEdges"/></g><ellipse cx="3032.4" cy="990.2" rx="90.8" ry="58.5" fill="none" stroke="#2b2b2b" stroke-width="1.6"/><path d="M1903.5,1222.0 V1464.0 A101.0,65.0 0 0 0 2105.5,1464.0 V1222.0 Z" fill="#858585"/><path d="M1903.5,1222.0 V1450.0 A101.0,65.0 0 0 0 2105.5,1450.0 V1222.0 Z" fill="#0000f4"/><path d="M1903.5,1222.0 V1396.5 A101.0,65.0 0 0 0 2105.5,1396.5 V1222.0 Z" fill="#0084c8"/><clipPath id="u16"><path d="M1903.5,1222.0 V1464.0 A101.0,65.0 0 0 0 2105.5,1464.0 V1222.0 Z"/></clipPath><g clip-path="url(#u16)"><path d="M2105.3,1225.9 V1467.9 M2105.3,1225.9 L2103.3,1410.0 M2103.3,1410.0 L2105.3,1453.9 M2103.3,1463.5 L2105.3,1467.9 M2103.3,1235.5 V1477.5 M2103.3,1235.5 L2099.1,1419.3 M2099.1,1419.3 L2103.3,1463.5 M2099.1,1472.8 L2103.3,1477.5 M2099.1,1244.8 V1486.8 M2099.1,1244.8 L2092.7,1428.2 M2092.7,1428.2 L2099.1,1472.8 M2092.7,1481.7 L2099.1,1486.8 M2092.7,1253.7 V1495.7 M2092.7,1253.7 L2084.4,1436.3 M2084.4,1436.3 L2092.7,1481.7 M2084.4,1489.8 L2092.7,1495.7 M2084.4,1261.8 V1503.8 M2084.4,1261.8 L2074.3,1443.5 M2074.3,1443.5 L2084.4,1489.8 M2074.3,1497.0 L2084.4,1503.8 M2074.3,1269.0 V1511.0 M2074.3,1269.0 L2062.6,1449.7 M2062.6,1449.7 L2074.3,1497.0 M2062.6,1503.2 L2074.3,1511.0 M2062.6,1275.2 V1517.2 M2062.6,1275.2 L2049.7,1454.6 M2049.7,1454.6 L2062.6,1503.2 M2049.7,1508.1 L2062.6,1517.2 M2049.7,1280.1 V1522.1 M2049.7,1280.1 L2035.7,1458.3 M2035.7,1458.3 L2049.7,1508.1 M2035.7,1511.8 L2049.7,1522.1 M2035.7,1283.8 V1525.8 M2035.7,1283.8 L2021.0,1460.6 M2021.0,1460.6 L2035.7,1511.8 M2021.0,1514.1 L2035.7,1525.8 M2021.0,1286.1 V1528.1 M2021.0,1286.1 L2006.0,1461.5 M2006.0,1461.5 L2021.0,1514.1 M2006.0,1515.0 L2021.0,1528.1 M2006.0,1287.0 V1529.0 M2006.0,1287.0 L1990.9,1460.9 M1990.9,1460.9 L2006.0,1515.0 M1990.9,1514.4 L2006.0,1529.0 M1990.9,1286.4 V1528.4 M1990.9,1286.4 L1976.2,1458.9 M1976.2,1458.9 L1990.9,1514.4 M1976.2,1512.4 L1990.9,1528.4 M1976.2,1284.4 V1526.4 M1976.2,1284.4 L1962.0,1455.5 M1962.0,1455.5 L1976.2,1512.4 M1962.0,1509.0 L1976.2,1526.4 M1962.0,1281.0 V1523.0 M1962.0,1281.0 L1948.8,1450.7 M1948.8,1450.7 L1962.0,1509.0 M1948.8,1504.2 L1962.0,1523.0 M1948.8,1276.2 V1518.2 M1948.8,1276.2 L1936.9,1444.8 M1936.9,1444.8 L1948.8,1504.2 M1936.9,1498.3 L1948.8,1518.2 M1936.9,1270.3 V1512.3 M1936.9,1270.3 L1926.5,1437.8 M1926.5,1437.8 L1936.9,1498.3 M1926.5,1491.3 L1936.9,1512.3 M1926.5,1263.3 V1505.3 M1926.5,1263.3 L1917.8,1429.8 M1917.8,1429.8 L1926.5,1491.3 M1917.8,1483.3 L1926.5,1505.3 M1917.8,1255.3 V1497.3 M1917.8,1255.3 L1911.0,1421.1 M1911.0,1421.1 L1917.8,1483.3 M1911.0,1474.6 L1917.8,1497.3 M1911.0,1246.6 V1488.6 M1911.0,1246.6 L1906.4,1411.9 M1906.4,1411.9 L1911.0,1474.6 M1906.4,1465.4 L1911.0,1488.6 M1906.4,1237.4 V1479.4 M1906.4,1237.4 L1903.9,1402.3 M1903.9,1402.3 L1906.4,1465.4 M1903.9,1455.8 L1906.4,1479.4 M1903.9,1227.8 V1469.8" stroke="#2b2b2b" stroke-width="1" fill="none" shape-rendering="crispEdges"/><path d="M1903.5,1396.5 A101.0,65.0 0 0 0 2105.5,1396.5" stroke="#2b2b2b" stroke-width="1.3" fill="none"/><path d="M1903.5,1450.0 A101.0,65.0 0 0 0 2105.5,1450.0" stroke="#2b2b2b" stroke-width="1.3" fill="none"/></g><path d="M1903.5,1222.0 V1464.0 A101.0,65.0 0 0 0 2105.5,1464.0 V1222.0" stroke="#2b2b2b" stroke-width="1.6" fill="none"/><ellipse cx="2004.5" cy="1222.0" rx="101.0" ry="65.0" fill="#00a0f0" stroke="#2b2b2b" stroke-width="1.6"/><path d="M2105.3,1225.9 L2095.1,1225.5 M2105.3,1225.9 L2093.3,1234.2 M2103.3,1235.5 L2093.3,1234.2 M2103.3,1235.5 L2089.5,1242.6 M2099.1,1244.8 L2089.5,1242.6 M2099.1,1244.8 L2083.8,1250.6 M2092.7,1253.7 L2083.8,1250.6 M2092.7,1253.7 L2076.3,1257.9 M2084.4,1261.8 L2076.3,1257.9 M2084.4,1261.8 L2067.2,1264.4 M2074.3,1269.0 L2067.2,1264.4 M2074.3,1269.0 L2056.8,1270.0 M2062.6,1275.2 L2056.8,1270.0 M2062.6,1275.2 L2045.1,1274.5 M2049.7,1280.1 L2045.1,1274.5 M2049.7,1280.1 L2032.5,1277.8 M2035.7,1283.8 L2032.5,1277.8 M2035.7,1283.8 L2019.4,1279.9 M2021.0,1286.1 L2019.4,1279.9 M2021.0,1286.1 L2005.8,1280.7 M2006.0,1287.0 L2005.8,1280.7 M2006.0,1287.0 L1992.3,1280.2 M1990.9,1286.4 L1992.3,1280.2 M1990.9,1286.4 L1979.0,1278.3 M1976.2,1284.4 L1979.0,1278.3 M1976.2,1284.4 L1966.3,1275.3 M1962.0,1281.0 L1966.3,1275.3 M1962.0,1281.0 L1954.5,1271.0 M1948.8,1276.2 L1954.5,1271.0 M1948.8,1276.2 L1943.7,1265.6 M1936.9,1270.3 L1943.7,1265.6 M1936.9,1270.3 L1934.4,1259.3 M1926.5,1263.3 L1934.4,1259.3 M1926.5,1263.3 L1926.5,1252.1 M1917.8,1255.3 L1926.5,1252.1 M1917.8,1255.3 L1920.5,1244.3 M1911.0,1246.6 L1920.5,1244.3 M1911.0,1246.6 L1916.3,1235.9 M1906.4,1237.4 L1916.3,1235.9 M1906.4,1237.4 L1914.1,1227.3 M1903.9,1227.8 L1914.1,1227.3 M1903.9,1227.8 L1913.9,1218.5 M1903.7,1218.1 L1913.9,1218.5 M1903.7,1218.1 L1915.7,1209.8 M1905.7,1208.5 L1915.7,1209.8 M1905.7,1208.5 L1919.5,1201.4 M1909.9,1199.2 L1919.5,1201.4 M1909.9,1199.2 L1925.2,1193.4 M1916.3,1190.3 L1925.2,1193.4 M1916.3,1190.3 L1932.7,1186.1 M1924.6,1182.2 L1932.7,1186.1 M1924.6,1182.2 L1941.8,1179.6 M1934.7,1175.0 L1941.8,1179.6 M1934.7,1175.0 L1952.2,1174.0 M1946.4,1168.8 L1952.2,1174.0 M1946.4,1168.8 L1963.9,1169.5 M1959.3,1163.9 L1963.9,1169.5 M1959.3,1163.9 L1976.5,1166.2 M1973.3,1160.2 L1976.5,1166.2 M1973.3,1160.2 L1989.6,1164.1 M1988.0,1157.9 L1989.6,1164.1 M1988.0,1157.9 L2003.2,1163.3 M2003.0,1157.0 L2003.2,1163.3 M2003.0,1157.0 L2016.7,1163.8 M2018.1,1157.6 L2016.7,1163.8 M2018.1,1157.6 L2030.0,1165.7 M2032.8,1159.6 L2030.0,1165.7 M2032.8,1159.6 L2042.7,1168.7 M2047.0,1163.0 L2042.7,1168.7 M2047.0,1163.0 L2054.5,1173.0 M2060.2,1167.8 L2054.5,1173.0 M2060.2,1167.8 L2065.3,1178.4 M2072.1,1173.7 L2065.3,1178.4 M2072.1,1173.7 L2074.6,1184.7 M2082.5,1180.7 L2074.6,1184.7 M2082.5,1180.7 L2082.5,1191.9 M2091.2,1188.7 L2082.5,1191.9 M2091.2,1188.7 L2088.5,1199.7 M2098.0,1197.4 L2088.5,1199.7 M2098.0,1197.4 L2092.7,1208.1 M2102.6,1206.6 L2092.7,1208.1 M2102.6,1206.6 L2094.9,1216.7 M2105.1,1216.2 L2094.9,1216.7 M2105.1,1216.2 L2095.1,1225.5" stroke="#2b2b2b" stroke-width="0.8" fill="none"/><clipPath id="u17"><ellipse cx="2004.5" cy="1222.0" rx="90.8" ry="58.7"/></clipPath><ellipse cx="2004.5" cy="1222.0" rx="90.8" ry="58.7" fill="#0084c8"/><g clip-path="url(#u17)"><path d="M1913.9,1218.5 V1401.5 M1915.7,1209.8 L1913.9,1414.5 M1915.7,1209.8 V1392.8 M1919.5,1201.4 L1915.7,1405.8 M1919.5,1201.4 V1384.4 M1925.2,1193.4 L1919.5,1397.4 M1925.2,1193.4 V1376.4 M1932.7,1186.1 L1925.2,1389.4 M1932.7,1186.1 V1369.1 M1941.8,1179.6 L1932.7,1382.1 M1941.8,1179.6 V1362.6 M1952.2,1174.0 L1941.8,1375.6 M1952.2,1174.0 V1357.0 M1963.9,1169.5 L1952.2,1370.0 M1963.9,1169.5 V1352.5 M1976.5,1166.2 L1963.9,1365.5 M1976.5,1166.2 V1349.2 M1989.6,1164.1 L1976.5,1362.2 M1989.6,1164.1 V1347.1 M2003.2,1163.3 L1989.6,1360.1 M2003.2,1163.3 V1346.3 M2016.7,1163.8 L2003.2,1359.3 M2016.7,1163.8 V1346.8 M2030.0,1165.7 L2016.7,1359.8 M2030.0,1165.7 V1348.7 M2042.7,1168.7 L2030.0,1361.7 M2042.7,1168.7 V1351.7 M2054.5,1173.0 L2042.7,1364.7 M2054.5,1173.0 V1356.0 M2065.3,1178.4 L2054.5,1369.0 M2065.3,1178.4 V1361.4 M2074.6,1184.7 L2065.3,1374.4 M2074.6,1184.7 V1367.7 M2082.5,1191.9 L2074.6,1380.7 M2082.5,1191.9 V1374.9 M2088.5,1199.7 L2082.5,1387.9 M2088.5,1199.7 V1382.7 M2092.7,1208.1 L2088.5,1395.7 M2092.7,1208.1 V1391.1 M2094.9,1216.7 L2092.7,1404.1 M2094.9,1216.7 V1399.7 M2095.1,1225.5 L2094.9,1412.7" stroke="#2b2b2b" stroke-width="1" fill="none" shape-rendering="crispEdges"/><clipPath id="u15"><path d="M1978,1240 C1992,1228 2012,1219.5 2034,1220 C2056,1222 2071,1236 2080,1250 L2095,1295 L1960,1295 Z"/></clipPath><path d="M1978,1240 C1992,1228 2012,1219.5 2034,1220 C2056,1222 2071,1236 2080,1250 L2095,1295 L1960,1295 Z" fill="#00a0f0"/><g clip-path="url(#u15)"><path d="M1960.0,1290 L2022.0,1215 M1971.6,1290 L2033.6,1215 M1983.2,1290 L2045.2,1215 M1994.8,1290 L2056.8,1215 M2006.4,1290 L2068.4,1215 M2018.0,1290 L2080.0,1215 M2029.6,1290 L2091.6,1215 M2041.2,1290 L2103.2,1215 M2052.8,1290 L2114.8,1215 M2064.4,1290 L2126.4,1215 M2076.0,1290 L2138.0,1215 M2087.6,1290 L2149.6,1215 M2099.2,1290 L2161.2,1215 M2110.8,1290 L2172.8,1215 M2122.4,1290 L2184.4,1215 M2134.0,1290 L2196.0,1215" stroke="#2b2b2b" stroke-width="1.2" fill="none"/></g><path d="M1953,1270 C1960,1250 1985,1239 2012,1238.7 C2035,1240 2052,1254 2072,1270 L2072,1300 L1953,1300 Z" fill="#0084c8" stroke="#2b2b2b" stroke-width="1.6"/><path d="M1962,1276 C1971,1256 1992,1248 2012,1247.7 C2030,1249 2046,1260 2064,1273" fill="none" stroke="#2b2b2b" stroke-width="1.6"/><clipPath id="u15b"><path d="M1962,1276 C1971,1256 1992,1248 2012,1247.7 C2030,1249 2046,1260 2064,1273 L2064,1300 L1962,1300 Z"/></clipPath><g clip-path="url(#u15b)"><path d="M1975.0,1250 V1300 M1985.5,1250 V1300 M1996.0,1250 V1300 M2006.5,1250 V1300 M2017.0,1250 V1300 M2027.5,1250 V1300 M2038.0,1250 V1300 M2048.5,1250 V1300 M2059.0,1250 V1300 M2069.5,1250 V1300" stroke="#2b2b2b" stroke-width="1" fill="none"/></g></g><ellipse cx="2004.5" cy="1222.0" rx="90.8" ry="58.7" fill="none" stroke="#2b2b2b" stroke-width="1.6"/></svg><div class="b" style="left:3176.7px;top:450.0px;width:343.3px;height:1182.5px;background:#f0f0f0;"></div><div class="b" style="left:3184.0px;top:451.0px;width:336.0px;height:31.3px;background:#dadada;border:1px solid #c4c4c4;"></div><svg style="position:absolute;left:3455px;top:455px" width="60" height="24" viewBox="3455 455 60 24"><path d="M3463.5,460.8 H3471.5 V468 M3460.3,464.5 H3468.5 V472.5 H3460.3 Z" fill="none" stroke="#222" stroke-width="2"/><path d="M3495.5,462 L3507,473.2 M3507,462 L3495.5,473.2" stroke="#222" stroke-width="2.6"/></svg><div class="b" style="left:3184.0px;top:485.0px;width:336.0px;height:1146.0px;border:1px solid #dadada;"></div><div class="b" style="left:3200.0px;top:510.2px;width:304.0px;height:262.8px;border:1px solid #dcdcdc;"></div><div class="b" style="left:3207.0px;top:500.2px;width:58.0px;height:20.0px;background:#f0f0f0;"></div><span class="t" style="left:3209.5px;top:502.8px;font-size:15.6px;color:#000;">Katsoja</span><span class="t" style="left:3261.5px;top:538.3px;font-size:15.6px;color:#000;transform:scaleX(0.9918);">Vaakakulma</span><span class="t" style="left:3274.5px;top:557.5px;font-size:15.6px;color:#000;transform:scaleX(1.0285);">363 gon</span><span class="t" style="left:3403.5px;top:538.3px;font-size:15.6px;color:#000;">Pystykulma</span><span class="t" style="left:3419.0px;top:557.5px;font-size:15.6px;color:#000;transform:scaleX(1.0269);">45 gon</span><svg style="position:absolute;left:3208.5px;top:576.4px" width="190" height="190" viewBox="3208.5 576.4 190 190"><defs><linearGradient id="dga" x1="0.2" y1="0" x2="0.7" y2="1"><stop offset="0" stop-color="#ffffff"/><stop offset="0.55" stop-color="#f0f0f0"/><stop offset="1" stop-color="#dcdcdc"/></linearGradient><radialGradient id="dsa" cx="0.5" cy="0.5" r="0.5"><stop offset="0.88" stop-color="#000" stop-opacity="0.22"/><stop offset="1" stop-color="#000" stop-opacity="0"/></radialGradient></defs><path d="M3375.3,671.4 L3391.3,671.4" stroke="#555" stroke-width="1.3"/><path d="M3362.0,729.9 L3367.7,735.6" stroke="#999" stroke-width="1.1"/><path d="M3303.5,743.2 L3303.5,759.2" stroke="#555" stroke-width="1.3"/><path d="M3245.0,729.9 L3239.3,735.6" stroke="#999" stroke-width="1.1"/><path d="M3231.7,671.4 L3215.7,671.4" stroke="#555" stroke-width="1.3"/><path d="M3245.0,612.9 L3239.3,607.2" stroke="#999" stroke-width="1.1"/><path d="M3303.5,599.6 L3303.5,583.6" stroke="#555" stroke-width="1.3"/><path d="M3362.0,612.9 L3367.7,607.2" stroke="#999" stroke-width="1.1"/><circle cx="3305.5" cy="674.4" r="74.8" fill="url(#dsa)"/><circle cx="3303.5" cy="671.4" r="69.8" fill="url(#dga)" stroke="#5a5a5a" stroke-width="1.2"/><path d="M3237.7,677.4 A65.8,65.8 0 0 0 3365.3,649.4 A90.7,90.7 0 0 1 3237.7,677.4" fill="#e4e4e4" opacity="0.55"/><circle cx="3276.6" cy="630" r="12" fill="#dedede" stroke="#a8a8a8" stroke-width="1.3"/></svg><div class="b" style="left:3441.0px;top:584.0px;width:4.0px;height:174.5px;background:#e7e7e7;border:1px solid #d2d2d2;"></div><div class="b" style="left:3415.0px;top:593.5px;width:5.0px;height:1.0px;background:#a0a0a0;"></div><div class="b" style="left:3468.0px;top:593.5px;width:5.0px;height:1.0px;background:#a0a0a0;"></div><div class="b" style="left:3415.0px;top:664.5px;width:5.0px;height:1.0px;background:#a0a0a0;"></div><div class="b" style="left:3468.0px;top:664.5px;width:5.0px;height:1.0px;background:#a0a0a0;"></div><div class="b" style="left:3415.0px;top:735.0px;width:5.0px;height:1.0px;background:#a0a0a0;"></div><div class="b" style="left:3468.0px;top:735.0px;width:5.0px;height:1.0px;background:#a0a0a0;"></div><div class="b" style="left:3420.7px;top:660.5px;width:45.3px;height:18.2px;background:#0078d7;"></div><div class="b" style="left:3200.0px;top:794.2px;width:304.0px;height:263.1px;border:1px solid #dcdcdc;"></div><div class="b" style="left:3207.0px;top:784.2px;width:68.1px;height:20.0px;background:#f0f0f0;"></div><span class="t" style="left:3209.5px;top:786.8px;font-size:15.6px;color:#000;">Valaistus</span><span class="t" style="left:3261.5px;top:822.5px;font-size:15.6px;color:#000;transform:scaleX(0.9918);">Vaakakulma</span><span class="t" style="left:3274.5px;top:841.5px;font-size:15.6px;color:#000;transform:scaleX(1.0285);">392 gon</span><span class="t" style="left:3403.5px;top:822.5px;font-size:15.6px;color:#000;">Pystykulma</span><span class="t" style="left:3419.0px;top:841.5px;font-size:15.6px;color:#000;transform:scaleX(1.0269);">75 gon</span><svg style="position:absolute;left:3208.5px;top:860.5px" width="190" height="190" viewBox="3208.5 860.5 190 190"><defs><linearGradient id="dgb" x1="0.2" y1="0" x2="0.7" y2="1"><stop offset="0" stop-color="#ffffff"/><stop offset="0.55" stop-color="#f0f0f0"/><stop offset="1" stop-color="#dcdcdc"/></linearGradient><radialGradient id="dsb" cx="0.5" cy="0.5" r="0.5"><stop offset="0.88" stop-color="#000" stop-opacity="0.22"/><stop offset="1" stop-color="#000" stop-opacity="0"/></radialGradient></defs><path d="M3375.3,955.5 L3391.3,955.5" stroke="#555" stroke-width="1.3"/><path d="M3362.0,1014.0 L3367.7,1019.7" stroke="#999" stroke-width="1.1"/><path d="M3303.5,1027.3 L3303.5,1043.3" stroke="#555" stroke-width="1.3"/><path d="M3245.0,1014.0 L3239.3,1019.7" stroke="#999" stroke-width="1.1"/><path d="M3231.7,955.5 L3215.7,955.5" stroke="#555" stroke-width="1.3"/><path d="M3245.0,897.0 L3239.3,891.3" stroke="#999" stroke-width="1.1"/><path d="M3303.5,883.7 L3303.5,867.7" stroke="#555" stroke-width="1.3"/><path d="M3362.0,897.0 L3367.7,891.3" stroke="#999" stroke-width="1.1"/><circle cx="3305.5" cy="958.5" r="74.8" fill="url(#dsb)"/><circle cx="3303.5" cy="955.5" r="69.8" fill="url(#dgb)" stroke="#5a5a5a" stroke-width="1.2"/><path d="M3237.7,961.5 A65.8,65.8 0 0 0 3365.3,933.5 A90.7,90.7 0 0 1 3237.7,961.5" fill="#e4e4e4" opacity="0.55"/><circle cx="3297.4" cy="906.3" r="12" fill="#dedede" stroke="#a8a8a8" stroke-width="1.3"/></svg><div class="b" style="left:3441.0px;top:868.7px;width:4.0px;height:173.6px;background:#e7e7e7;border:1px solid #d2d2d2;"></div><div class="b" style="left:3415.0px;top:877.0px;width:5.0px;height:1.0px;background:#a0a0a0;"></div><div class="b" style="left:3468.0px;top:877.0px;width:5.0px;height:1.0px;background:#a0a0a0;"></div><div class="b" style="left:3415.0px;top:948.0px;width:5.0px;height:1.0px;background:#a0a0a0;"></div><div class="b" style="left:3468.0px;top:948.0px;width:5.0px;height:1.0px;background:#a0a0a0;"></div><div class="b" style="left:3415.0px;top:1019.0px;width:5.0px;height:1.0px;background:#a0a0a0;"></div><div class="b" style="left:3468.0px;top:1019.0px;width:5.0px;height:1.0px;background:#a0a0a0;"></div><div class="b" style="left:3420.7px;top:902.9px;width:45.3px;height:17.7px;background:#0078d7;"></div><div class="b" style="left:3200.0px;top:1069.3px;width:304.0px;height:149.7px;border:1px solid #dcdcdc;"></div><span class="t" style="left:3215.7px;top:1087.5px;font-size:15.6px;color:#000;transform:scaleX(1.0122);">Yleisvalaistus: 82</span><span class="t" style="left:3215.7px;top:1119.6px;font-size:15.6px;color:#000;transform:scaleX(1.0378);">Hajavalo: 23</span><div class="b" style="left:3371.0px;top:1093.5px;width:116.5px;height:3.5px;background:#e7e7e7;border:1px solid #d6d6d6;"></div><div class="b" style="left:3451.9px;top:1084.7px;width:18.1px;height:21.3px;background:#0078d7;"></div><div class="b" style="left:3371.0px;top:1125.5px;width:116.5px;height:3.5px;background:#e7e7e7;border:1px solid #d6d6d6;"></div><div class="b" style="left:3393.8px;top:1116.8px;width:18.4px;height:21.0px;background:#0078d7;"></div><div class="b" style="left:3216.0px;top:1150.3px;width:20.0px;height:19.3px;background:#fff;border:1px solid #333;"></div><span class="t" style="left:3244.8px;top:1152.8px;font-size:15.6px;color:#000;transform:scaleX(0.9902);">Harmaa sävy</span><div class="b" style="left:3216.0px;top:1183.0px;width:20.0px;height:19.6px;background:#fff;border:1px solid #333;"></div><span class="t" style="left:3244.8px;top:1186.1px;font-size:15.6px;color:#000;transform:scaleX(0.9845);">Seuraa katsojaa</span><div class="b" style="left:3200.0px;top:1231.4px;width:304.0px;height:290.9px;border:1px solid #dcdcdc;"></div><div class="b" style="left:3200.0px;top:1543.3px;width:304.0px;height:72.1px;border:1px solid #dcdcdc;"></div><div class="b" style="left:3207.0px;top:1533.3px;width:38.1px;height:20.0px;background:#f0f0f0;"></div><span class="t" style="left:3209.5px;top:1535.9px;font-size:15.6px;color:#000;">Malli</span><span class="t" style="left:3215.7px;top:1578.3px;font-size:15.6px;color:#000;transform:scaleX(1.0256);">Z-Arvo</span><div class="b" style="left:3421.0px;top:1569.2px;width:66.6px;height:31.1px;background:#fff;border:1px solid #7a7a7a;"></div><span class="t" style="left:3425.0px;top:1578.3px;font-size:15.6px;color:#000;transform:scaleX(1.0145);">1,0</span><div class="b" style="left:3472.0px;top:1571.5px;width:13.5px;height:12.8px;background:#e1e1e1;border:1px solid #c0c0c0;"></div><div class="b" style="left:3472.0px;top:1585.3px;width:13.5px;height:12.7px;background:#e1e1e1;border:1px solid #c0c0c0;"></div><svg style="position:absolute;left:3472px;top:1571px" width="14" height="28" viewBox="3472 1571 14 28"><path d="M3474.5,1580.5 L3478.7,1575.3 L3483,1580.5 Z M3474.5,1589.5 L3478.7,1594.7 L3483,1589.5 Z" fill="#000"/></svg>
</body></html>
